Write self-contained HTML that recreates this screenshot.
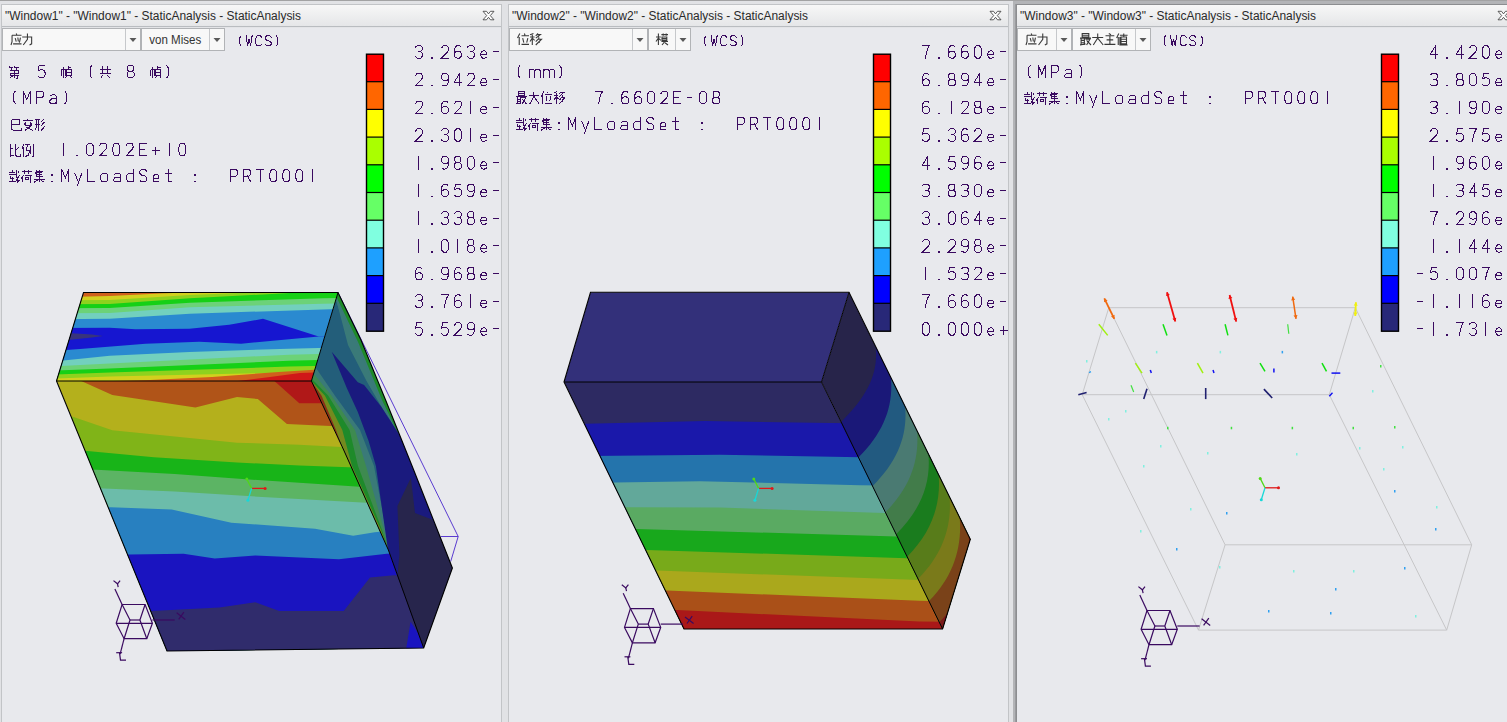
<!DOCTYPE html>
<html><head><meta charset="utf-8"><style>
html,body{margin:0;padding:0;width:1507px;height:722px;overflow:hidden;background:#e8e9ed;}
svg{display:block;position:absolute;left:0;top:0;}
</style></head><body>
<svg width="1507" height="722" viewBox="0 0 1507 722" shape-rendering="auto">
<rect x="0" y="0" width="1507" height="722" fill="#e1e2e5"/>
<rect x="0" y="0" width="1507" height="1" fill="#a2a2a3"/>
<rect x="1013" y="1" width="494" height="722" fill="#b3b4b7"/>
<rect x="1" y="4" width="501" height="718" fill="#c2c4c7"/>
<rect x="2" y="5" width="499" height="21" fill="url(#tg)"/>
<rect x="2" y="26" width="499" height="1" fill="#b9bcc0"/>
<rect x="2" y="27" width="499" height="695" fill="#e8e9ed"/>
<rect x="2" y="27" width="499" height="1" fill="#e3e4e7"/>
<rect x="508" y="4" width="501" height="718" fill="#c2c4c7"/>
<rect x="509" y="5" width="499" height="21" fill="url(#tg)"/>
<rect x="509" y="26" width="499" height="1" fill="#b9bcc0"/>
<rect x="509" y="27" width="499" height="695" fill="#e8e9ed"/>
<rect x="509" y="27" width="499" height="1" fill="#e3e4e7"/>
<rect x="1016" y="4" width="493" height="718" fill="#8c8d90"/>
<rect x="1017" y="5" width="491" height="21" fill="url(#tg)"/>
<rect x="1017" y="26" width="491" height="1" fill="#b9bcc0"/>
<rect x="1017" y="27" width="491" height="695" fill="#e8e9ed"/>
<rect x="1017" y="27" width="491" height="1" fill="#e3e4e7"/>
<rect x="1015" y="4" width="1" height="718" fill="#9a9b9e"/>
<defs><linearGradient id="tg" x1="0" y1="0" x2="0" y2="1"><stop offset="0" stop-color="#f7f7f7"/><stop offset="1" stop-color="#e5e6e8"/></linearGradient></defs>
<text x="5" y="20" font-family="Liberation Sans" font-size="12.3" fill="#2a2a2a" textLength="296" lengthAdjust="spacingAndGlyphs">"Window1" - "Window1" - StaticAnalysis - StaticAnalysis</text>
<text x="512" y="20" font-family="Liberation Sans" font-size="12.3" fill="#2a2a2a" textLength="296" lengthAdjust="spacingAndGlyphs">"Window2" - "Window2" - StaticAnalysis - StaticAnalysis</text>
<text x="1020" y="20" font-family="Liberation Sans" font-size="12.3" fill="#2a2a2a" textLength="296" lengthAdjust="spacingAndGlyphs">"Window3" - "Window3" - StaticAnalysis - StaticAnalysis</text>
<polygon points="483.0,11.3 486.5,11.3 488.5,13.9 490.5,11.3 494.0,11.3 490.3,15.6 494.0,19.8 490.5,19.8 488.5,17.3 486.5,19.8 483.0,19.8 486.7,15.6" fill="#ffffff" stroke="#404040" stroke-width="0.85" stroke-linejoin="round"/>
<polygon points="990.0,11.3 993.5,11.3 995.5,13.9 997.5,11.3 1001.0,11.3 997.3,15.6 1001.0,19.8 997.5,19.8 995.5,17.3 993.5,19.8 990.0,19.8 993.7,15.6" fill="#ffffff" stroke="#404040" stroke-width="0.85" stroke-linejoin="round"/>
<polygon points="1498.0,11.3 1501.5,11.3 1503.5,13.9 1505.5,11.3 1509.0,11.3 1505.3,15.6 1509.0,19.8 1505.5,19.8 1503.5,17.3 1501.5,19.8 1498.0,19.8 1501.7,15.6" fill="#ffffff" stroke="#404040" stroke-width="0.85" stroke-linejoin="round"/>
<rect x="2.5" y="28.5" width="138.0" height="22" fill="#f8f8f8" stroke="#b1b3b6" stroke-width="1"/>
<rect x="125" y="29" width="1" height="21" fill="#c6c8cb"/>
<path d="M129.5,38 L136.5,38 L133.0,42 Z" fill="#5a5a5a"/>
<rect x="141.5" y="28.5" width="83.0" height="22" fill="#f8f8f8" stroke="#b1b3b6" stroke-width="1"/>
<rect x="209" y="29" width="1" height="21" fill="#c6c8cb"/>
<path d="M213.5,38 L220.5,38 L217.0,42 Z" fill="#5a5a5a"/>
<text x="149.2" y="44" font-family="Liberation Sans" font-size="12.5" fill="#333" textLength="52" lengthAdjust="spacingAndGlyphs">von Mises</text>
<rect x="509.5" y="28.5" width="138.0" height="22" fill="#f8f8f8" stroke="#b1b3b6" stroke-width="1"/>
<rect x="632" y="29" width="1" height="21" fill="#c6c8cb"/>
<path d="M636.5,38 L643.5,38 L640.0,42 Z" fill="#5a5a5a"/>
<rect x="648.5" y="28.5" width="42.0" height="22" fill="#f8f8f8" stroke="#b1b3b6" stroke-width="1"/>
<rect x="675" y="29" width="1" height="21" fill="#c6c8cb"/>
<path d="M679.5,38 L686.5,38 L683.0,42 Z" fill="#5a5a5a"/>
<rect x="1017.5" y="28.5" width="54.0" height="22" fill="#f8f8f8" stroke="#b1b3b6" stroke-width="1"/>
<rect x="1056" y="29" width="1" height="21" fill="#c6c8cb"/>
<path d="M1060.5,38 L1067.5,38 L1064.0,42 Z" fill="#5a5a5a"/>
<rect x="1072.5" y="28.5" width="78.0" height="22" fill="#f8f8f8" stroke="#b1b3b6" stroke-width="1"/>
<rect x="1135" y="29" width="1" height="21" fill="#c6c8cb"/>
<path d="M1139.5,38 L1146.5,38 L1143.0,42 Z" fill="#5a5a5a"/>
<path d="M 241.00,35.90 L 239.50,38.15 L 239.50,43.40 L 241.00,45.65 M 246.10,35.90 L 247.60,45.65 L 249.10,38.90 L 250.60,45.65 L 252.10,35.90 M 261.70,37.40 L 260.20,35.90 L 257.20,35.90 L 255.70,38.15 L 255.70,43.40 L 257.20,45.65 L 260.20,45.65 L 261.70,44.15 M 271.30,37.40 L 269.80,35.90 L 266.80,35.90 L 265.30,37.40 L 265.30,38.90 L 266.80,40.40 L 269.80,41.15 L 271.30,42.65 L 271.30,44.15 L 269.80,45.65 L 266.80,45.65 L 265.30,44.15 M 276.40,35.90 L 277.90,38.15 L 277.90,43.40 L 276.40,45.65" fill="none" stroke="#3a0a60" stroke-width="1.00" stroke-linecap="square" stroke-linejoin="miter" shape-rendering="crispEdges"/>
<path d="M 706.00,35.90 L 704.50,38.15 L 704.50,43.40 L 706.00,45.65 M 711.10,35.90 L 712.60,45.65 L 714.10,38.90 L 715.60,45.65 L 717.10,35.90 M 726.70,37.40 L 725.20,35.90 L 722.20,35.90 L 720.70,38.15 L 720.70,43.40 L 722.20,45.65 L 725.20,45.65 L 726.70,44.15 M 736.30,37.40 L 734.80,35.90 L 731.80,35.90 L 730.30,37.40 L 730.30,38.90 L 731.80,40.40 L 734.80,41.15 L 736.30,42.65 L 736.30,44.15 L 734.80,45.65 L 731.80,45.65 L 730.30,44.15 M 741.40,35.90 L 742.90,38.15 L 742.90,43.40 L 741.40,45.65" fill="none" stroke="#3a0a60" stroke-width="1.00" stroke-linecap="square" stroke-linejoin="miter" shape-rendering="crispEdges"/>
<path d="M 1165.50,35.90 L 1164.00,38.15 L 1164.00,43.40 L 1165.50,45.65 M 1170.60,35.90 L 1172.10,45.65 L 1173.60,38.90 L 1175.10,45.65 L 1176.60,35.90 M 1186.20,37.40 L 1184.70,35.90 L 1181.70,35.90 L 1180.20,38.15 L 1180.20,43.40 L 1181.70,45.65 L 1184.70,45.65 L 1186.20,44.15 M 1195.80,37.40 L 1194.30,35.90 L 1191.30,35.90 L 1189.80,37.40 L 1189.80,38.90 L 1191.30,40.40 L 1194.30,41.15 L 1195.80,42.65 L 1195.80,44.15 L 1194.30,45.65 L 1191.30,45.65 L 1189.80,44.15 M 1200.90,35.90 L 1202.40,38.15 L 1202.40,43.40 L 1200.90,45.65" fill="none" stroke="#3a0a60" stroke-width="1.00" stroke-linecap="square" stroke-linejoin="miter" shape-rendering="crispEdges"/>
<rect x="366.5" y="54.00" width="17" height="28.00" fill="#ff0000"/>
<rect x="366.5" y="81.70" width="17" height="28.00" fill="#ff6600"/>
<rect x="366.5" y="109.40" width="17" height="28.00" fill="#ffff00"/>
<rect x="366.5" y="137.10" width="17" height="28.00" fill="#aaff00"/>
<rect x="366.5" y="164.80" width="17" height="28.00" fill="#00ff00"/>
<rect x="366.5" y="192.50" width="17" height="28.00" fill="#66ff66"/>
<rect x="366.5" y="220.20" width="17" height="28.00" fill="#80ffe0"/>
<rect x="366.5" y="247.90" width="17" height="28.00" fill="#1ea0ff"/>
<rect x="366.5" y="275.60" width="17" height="28.00" fill="#0000ff"/>
<rect x="366.5" y="303.30" width="17" height="28.00" fill="#282878"/>
<rect x="366.5" y="81.10" width="17" height="1.2" fill="#000"/>
<rect x="366.5" y="108.80" width="17" height="1.2" fill="#000"/>
<rect x="366.5" y="136.50" width="17" height="1.2" fill="#000"/>
<rect x="366.5" y="164.20" width="17" height="1.2" fill="#000"/>
<rect x="366.5" y="191.90" width="17" height="1.2" fill="#000"/>
<rect x="366.5" y="219.60" width="17" height="1.2" fill="#000"/>
<rect x="366.5" y="247.30" width="17" height="1.2" fill="#000"/>
<rect x="366.5" y="275.00" width="17" height="1.2" fill="#000"/>
<rect x="366.5" y="302.70" width="17" height="1.2" fill="#000"/>
<rect x="366.5" y="54.2" width="17" height="277.00" fill="none" stroke="#000" stroke-width="1.4"/>
<path d="M 415.66,47.05 L 417.15,45.60 L 420.65,45.60 L 422.14,47.05 L 422.14,49.97 L 420.65,51.61 L 418.02,51.61 M 420.65,51.61 L 422.40,53.36 L 422.40,56.27 L 420.65,58.21 L 417.15,58.21 L 415.40,56.76 M 431.55,57.63 L 432.25,57.63 L 432.25,58.21 L 431.55,58.21 Z M 441.66,48.02 L 442.71,46.18 L 444.02,45.60 L 446.21,45.60 L 447.79,46.38 L 448.40,48.02 L 448.40,49.97 L 447.52,51.91 L 441.40,58.21 L 448.40,58.21 M 460.52,46.57 L 459.21,45.60 L 457.02,45.60 L 455.27,47.05 L 454.40,50.45 L 454.40,55.30 L 455.27,57.24 L 457.02,58.21 L 459.21,58.21 L 460.79,57.24 L 461.40,55.30 L 461.40,53.36 L 460.52,51.91 L 459.21,51.23 L 457.02,51.23 L 455.27,52.20 L 454.40,53.84 M 467.66,47.05 L 469.15,45.60 L 472.65,45.60 L 474.14,47.05 L 474.14,49.97 L 472.65,51.61 L 470.02,51.61 M 472.65,51.61 L 474.40,53.36 L 474.40,56.27 L 472.65,58.21 L 469.15,58.21 L 467.40,56.76 M 480.84,54.33 L 486.52,54.33 L 486.52,52.88 L 485.65,51.42 L 484.60,50.94 L 482.85,50.94 L 481.54,51.71 L 480.84,53.36 L 480.84,55.79 L 481.54,57.53 L 482.85,58.21 L 484.60,58.21 L 486.52,57.24 M 493.84,51.91 L 498.65,51.91" fill="none" stroke="#3a0a60" stroke-width="1.00" stroke-linecap="square" stroke-linejoin="miter" shape-rendering="crispEdges"/>
<path d="M 415.66,75.72 L 416.71,73.88 L 418.02,73.30 L 420.21,73.30 L 421.79,74.08 L 422.40,75.72 L 422.40,77.66 L 421.52,79.60 L 415.40,85.91 L 422.40,85.91 M 431.55,85.33 L 432.25,85.33 L 432.25,85.91 L 431.55,85.91 Z M 448.40,78.63 L 447.52,80.09 L 445.77,80.58 L 444.02,80.58 L 442.27,79.60 L 441.40,78.15 L 441.40,75.72 L 442.71,73.78 L 444.02,73.30 L 446.21,73.30 L 447.79,74.27 L 448.40,76.21 L 448.40,80.09 L 447.96,83.00 L 446.65,85.42 L 445.34,85.91 L 443.59,85.91 L 441.84,84.94 M 459.65,85.91 L 459.65,73.30 L 454.40,82.03 L 461.40,82.03 M 467.66,75.72 L 468.71,73.88 L 470.02,73.30 L 472.21,73.30 L 473.79,74.08 L 474.40,75.72 L 474.40,77.66 L 473.52,79.60 L 467.40,85.91 L 474.40,85.91 M 480.84,82.03 L 486.52,82.03 L 486.52,80.58 L 485.65,79.12 L 484.60,78.63 L 482.85,78.63 L 481.54,79.41 L 480.84,81.06 L 480.84,83.48 L 481.54,85.23 L 482.85,85.91 L 484.60,85.91 L 486.52,84.94 M 493.84,79.60 L 498.65,79.60" fill="none" stroke="#3a0a60" stroke-width="1.00" stroke-linecap="square" stroke-linejoin="miter" shape-rendering="crispEdges"/>
<path d="M 415.66,103.42 L 416.71,101.58 L 418.02,101.00 L 420.21,101.00 L 421.79,101.78 L 422.40,103.42 L 422.40,105.36 L 421.52,107.31 L 415.40,113.61 L 422.40,113.61 M 431.55,113.03 L 432.25,113.03 L 432.25,113.61 L 431.55,113.61 Z M 447.52,101.97 L 446.21,101.00 L 444.02,101.00 L 442.27,102.45 L 441.40,105.85 L 441.40,110.70 L 442.27,112.64 L 444.02,113.61 L 446.21,113.61 L 447.79,112.64 L 448.40,110.70 L 448.40,108.76 L 447.52,107.31 L 446.21,106.63 L 444.02,106.63 L 442.27,107.60 L 441.40,109.25 M 454.66,103.42 L 455.71,101.58 L 457.02,101.00 L 459.21,101.00 L 460.79,101.78 L 461.40,103.42 L 461.40,105.36 L 460.52,107.31 L 454.40,113.61 L 461.40,113.61 M 470.90,101.00 L 470.90,113.61 M 480.84,109.73 L 486.52,109.73 L 486.52,108.28 L 485.65,106.82 L 484.60,106.33 L 482.85,106.33 L 481.54,107.11 L 480.84,108.76 L 480.84,111.19 L 481.54,112.93 L 482.85,113.61 L 484.60,113.61 L 486.52,112.64 M 493.84,107.31 L 498.65,107.31" fill="none" stroke="#3a0a60" stroke-width="1.00" stroke-linecap="square" stroke-linejoin="miter" shape-rendering="crispEdges"/>
<path d="M 415.66,131.12 L 416.71,129.28 L 418.02,128.70 L 420.21,128.70 L 421.79,129.48 L 422.40,131.12 L 422.40,133.06 L 421.52,135.00 L 415.40,141.31 L 422.40,141.31 M 431.55,140.73 L 432.25,140.73 L 432.25,141.31 L 431.55,141.31 Z M 441.66,130.16 L 443.15,128.70 L 446.65,128.70 L 448.14,130.16 L 448.14,133.06 L 446.65,134.71 L 444.02,134.71 M 446.65,134.71 L 448.40,136.46 L 448.40,139.37 L 446.65,141.31 L 443.15,141.31 L 441.40,139.85 M 456.59,128.70 L 459.21,128.70 L 460.96,130.64 L 461.40,133.55 L 461.40,136.46 L 460.96,139.37 L 459.21,141.31 L 456.59,141.31 L 454.84,139.37 L 454.40,136.46 L 454.40,133.55 L 454.84,130.64 Z M 470.90,128.70 L 470.90,141.31 M 480.84,137.43 L 486.52,137.43 L 486.52,135.97 L 485.65,134.52 L 484.60,134.03 L 482.85,134.03 L 481.54,134.81 L 480.84,136.46 L 480.84,138.88 L 481.54,140.63 L 482.85,141.31 L 484.60,141.31 L 486.52,140.34 M 493.84,135.00 L 498.65,135.00" fill="none" stroke="#3a0a60" stroke-width="1.00" stroke-linecap="square" stroke-linejoin="miter" shape-rendering="crispEdges"/>
<path d="M 418.90,156.40 L 418.90,169.01 M 431.55,168.43 L 432.25,168.43 L 432.25,169.01 L 431.55,169.01 Z M 448.40,161.74 L 447.52,163.19 L 445.77,163.68 L 444.02,163.68 L 442.27,162.71 L 441.40,161.25 L 441.40,158.83 L 442.71,156.89 L 444.02,156.40 L 446.21,156.40 L 447.79,157.37 L 448.40,159.31 L 448.40,163.19 L 447.96,166.10 L 446.65,168.53 L 445.34,169.01 L 443.59,169.01 L 441.84,168.04 M 456.15,156.40 L 459.65,156.40 L 460.96,157.86 L 460.96,160.77 L 459.65,162.41 L 456.15,162.41 L 454.84,160.77 L 454.84,157.86 Z M 456.15,162.41 L 459.65,162.41 L 461.40,164.16 L 461.40,167.36 L 459.65,169.01 L 456.15,169.01 L 454.40,167.36 L 454.40,164.16 Z M 469.59,156.40 L 472.21,156.40 L 473.96,158.34 L 474.40,161.25 L 474.40,164.16 L 473.96,167.07 L 472.21,169.01 L 469.59,169.01 L 467.84,167.07 L 467.40,164.16 L 467.40,161.25 L 467.84,158.34 Z M 480.84,165.13 L 486.52,165.13 L 486.52,163.68 L 485.65,162.22 L 484.60,161.74 L 482.85,161.74 L 481.54,162.51 L 480.84,164.16 L 480.84,166.59 L 481.54,168.33 L 482.85,169.01 L 484.60,169.01 L 486.52,168.04 M 493.84,162.71 L 498.65,162.71" fill="none" stroke="#3a0a60" stroke-width="1.00" stroke-linecap="square" stroke-linejoin="miter" shape-rendering="crispEdges"/>
<path d="M 418.90,184.10 L 418.90,196.71 M 431.55,196.13 L 432.25,196.13 L 432.25,196.71 L 431.55,196.71 Z M 447.52,185.07 L 446.21,184.10 L 444.02,184.10 L 442.27,185.56 L 441.40,188.95 L 441.40,193.80 L 442.27,195.74 L 444.02,196.71 L 446.21,196.71 L 447.79,195.74 L 448.40,193.80 L 448.40,191.86 L 447.52,190.41 L 446.21,189.73 L 444.02,189.73 L 442.27,190.70 L 441.40,192.34 M 460.96,184.10 L 455.27,184.10 L 454.84,189.44 L 456.59,188.76 L 459.21,188.76 L 460.96,189.92 L 461.40,192.34 L 460.96,195.25 L 459.21,196.71 L 456.59,196.71 L 454.40,195.25 M 474.40,189.44 L 473.52,190.89 L 471.77,191.38 L 470.02,191.38 L 468.27,190.41 L 467.40,188.95 L 467.40,186.53 L 468.71,184.59 L 470.02,184.10 L 472.21,184.10 L 473.79,185.07 L 474.40,187.01 L 474.40,190.89 L 473.96,193.80 L 472.65,196.22 L 471.34,196.71 L 469.59,196.71 L 467.84,195.74 M 480.84,192.83 L 486.52,192.83 L 486.52,191.38 L 485.65,189.92 L 484.60,189.44 L 482.85,189.44 L 481.54,190.21 L 480.84,191.86 L 480.84,194.28 L 481.54,196.03 L 482.85,196.71 L 484.60,196.71 L 486.52,195.74 M 493.84,190.41 L 498.65,190.41" fill="none" stroke="#3a0a60" stroke-width="1.00" stroke-linecap="square" stroke-linejoin="miter" shape-rendering="crispEdges"/>
<path d="M 418.90,211.80 L 418.90,224.41 M 431.55,223.83 L 432.25,223.83 L 432.25,224.41 L 431.55,224.41 Z M 441.66,213.25 L 443.15,211.80 L 446.65,211.80 L 448.14,213.25 L 448.14,216.16 L 446.65,217.81 L 444.02,217.81 M 446.65,217.81 L 448.40,219.56 L 448.40,222.47 L 446.65,224.41 L 443.15,224.41 L 441.40,222.95 M 454.66,213.25 L 456.15,211.80 L 459.65,211.80 L 461.14,213.25 L 461.14,216.16 L 459.65,217.81 L 457.02,217.81 M 459.65,217.81 L 461.40,219.56 L 461.40,222.47 L 459.65,224.41 L 456.15,224.41 L 454.40,222.95 M 469.15,211.80 L 472.65,211.80 L 473.96,213.25 L 473.96,216.16 L 472.65,217.81 L 469.15,217.81 L 467.84,216.16 L 467.84,213.25 Z M 469.15,217.81 L 472.65,217.81 L 474.40,219.56 L 474.40,222.76 L 472.65,224.41 L 469.15,224.41 L 467.40,222.76 L 467.40,219.56 Z M 480.84,220.53 L 486.52,220.53 L 486.52,219.07 L 485.65,217.62 L 484.60,217.13 L 482.85,217.13 L 481.54,217.91 L 480.84,219.56 L 480.84,221.98 L 481.54,223.73 L 482.85,224.41 L 484.60,224.41 L 486.52,223.44 M 493.84,218.10 L 498.65,218.10" fill="none" stroke="#3a0a60" stroke-width="1.00" stroke-linecap="square" stroke-linejoin="miter" shape-rendering="crispEdges"/>
<path d="M 418.90,239.50 L 418.90,252.11 M 431.55,251.53 L 432.25,251.53 L 432.25,252.11 L 431.55,252.11 Z M 443.59,239.50 L 446.21,239.50 L 447.96,241.44 L 448.40,244.35 L 448.40,247.26 L 447.96,250.17 L 446.21,252.11 L 443.59,252.11 L 441.84,250.17 L 441.40,247.26 L 441.40,244.35 L 441.84,241.44 Z M 457.90,239.50 L 457.90,252.11 M 469.15,239.50 L 472.65,239.50 L 473.96,240.96 L 473.96,243.87 L 472.65,245.51 L 469.15,245.51 L 467.84,243.87 L 467.84,240.96 Z M 469.15,245.51 L 472.65,245.51 L 474.40,247.26 L 474.40,250.46 L 472.65,252.11 L 469.15,252.11 L 467.40,250.46 L 467.40,247.26 Z M 480.84,248.23 L 486.52,248.23 L 486.52,246.78 L 485.65,245.32 L 484.60,244.84 L 482.85,244.84 L 481.54,245.61 L 480.84,247.26 L 480.84,249.69 L 481.54,251.43 L 482.85,252.11 L 484.60,252.11 L 486.52,251.14 M 493.84,245.81 L 498.65,245.81" fill="none" stroke="#3a0a60" stroke-width="1.00" stroke-linecap="square" stroke-linejoin="miter" shape-rendering="crispEdges"/>
<path d="M 421.52,268.17 L 420.21,267.20 L 418.02,267.20 L 416.27,268.65 L 415.40,272.05 L 415.40,276.90 L 416.27,278.84 L 418.02,279.81 L 420.21,279.81 L 421.79,278.84 L 422.40,276.90 L 422.40,274.96 L 421.52,273.50 L 420.21,272.83 L 418.02,272.83 L 416.27,273.80 L 415.40,275.44 M 431.55,279.23 L 432.25,279.23 L 432.25,279.81 L 431.55,279.81 Z M 448.40,272.53 L 447.52,273.99 L 445.77,274.47 L 444.02,274.47 L 442.27,273.50 L 441.40,272.05 L 441.40,269.62 L 442.71,267.69 L 444.02,267.20 L 446.21,267.20 L 447.79,268.17 L 448.40,270.11 L 448.40,273.99 L 447.96,276.90 L 446.65,279.32 L 445.34,279.81 L 443.59,279.81 L 441.84,278.84 M 460.52,268.17 L 459.21,267.20 L 457.02,267.20 L 455.27,268.65 L 454.40,272.05 L 454.40,276.90 L 455.27,278.84 L 457.02,279.81 L 459.21,279.81 L 460.79,278.84 L 461.40,276.90 L 461.40,274.96 L 460.52,273.50 L 459.21,272.83 L 457.02,272.83 L 455.27,273.80 L 454.40,275.44 M 469.15,267.20 L 472.65,267.20 L 473.96,268.65 L 473.96,271.56 L 472.65,273.21 L 469.15,273.21 L 467.84,271.56 L 467.84,268.65 Z M 469.15,273.21 L 472.65,273.21 L 474.40,274.96 L 474.40,278.16 L 472.65,279.81 L 469.15,279.81 L 467.40,278.16 L 467.40,274.96 Z M 480.84,275.93 L 486.52,275.93 L 486.52,274.47 L 485.65,273.02 L 484.60,272.53 L 482.85,272.53 L 481.54,273.31 L 480.84,274.96 L 480.84,277.38 L 481.54,279.13 L 482.85,279.81 L 484.60,279.81 L 486.52,278.84 M 493.84,273.50 L 498.65,273.50" fill="none" stroke="#3a0a60" stroke-width="1.00" stroke-linecap="square" stroke-linejoin="miter" shape-rendering="crispEdges"/>
<path d="M 415.66,296.35 L 417.15,294.90 L 420.65,294.90 L 422.14,296.35 L 422.14,299.26 L 420.65,300.91 L 418.02,300.91 M 420.65,300.91 L 422.40,302.66 L 422.40,305.57 L 420.65,307.51 L 417.15,307.51 L 415.40,306.05 M 431.55,306.93 L 432.25,306.93 L 432.25,307.51 L 431.55,307.51 Z M 441.40,294.90 L 448.40,294.90 L 446.65,298.29 L 445.34,302.17 L 444.46,307.51 M 460.52,295.87 L 459.21,294.90 L 457.02,294.90 L 455.27,296.35 L 454.40,299.75 L 454.40,304.60 L 455.27,306.54 L 457.02,307.51 L 459.21,307.51 L 460.79,306.54 L 461.40,304.60 L 461.40,302.66 L 460.52,301.20 L 459.21,300.53 L 457.02,300.53 L 455.27,301.50 L 454.40,303.14 M 470.90,294.90 L 470.90,307.51 M 480.84,303.63 L 486.52,303.63 L 486.52,302.17 L 485.65,300.72 L 484.60,300.23 L 482.85,300.23 L 481.54,301.01 L 480.84,302.66 L 480.84,305.08 L 481.54,306.83 L 482.85,307.51 L 484.60,307.51 L 486.52,306.54 M 493.84,301.20 L 498.65,301.20" fill="none" stroke="#3a0a60" stroke-width="1.00" stroke-linecap="square" stroke-linejoin="miter" shape-rendering="crispEdges"/>
<path d="M 421.96,322.60 L 416.27,322.60 L 415.84,327.94 L 417.59,327.26 L 420.21,327.26 L 421.96,328.42 L 422.40,330.85 L 421.96,333.75 L 420.21,335.21 L 417.59,335.21 L 415.40,333.75 M 431.55,334.63 L 432.25,334.63 L 432.25,335.21 L 431.55,335.21 Z M 447.96,322.60 L 442.27,322.60 L 441.84,327.94 L 443.59,327.26 L 446.21,327.26 L 447.96,328.42 L 448.40,330.85 L 447.96,333.75 L 446.21,335.21 L 443.59,335.21 L 441.40,333.75 M 454.66,325.03 L 455.71,323.18 L 457.02,322.60 L 459.21,322.60 L 460.79,323.38 L 461.40,325.03 L 461.40,326.97 L 460.52,328.91 L 454.40,335.21 L 461.40,335.21 M 474.40,327.94 L 473.52,329.39 L 471.77,329.88 L 470.02,329.88 L 468.27,328.91 L 467.40,327.45 L 467.40,325.03 L 468.71,323.09 L 470.02,322.60 L 472.21,322.60 L 473.79,323.57 L 474.40,325.51 L 474.40,329.39 L 473.96,332.30 L 472.65,334.73 L 471.34,335.21 L 469.59,335.21 L 467.84,334.24 M 480.84,331.33 L 486.52,331.33 L 486.52,329.88 L 485.65,328.42 L 484.60,327.94 L 482.85,327.94 L 481.54,328.71 L 480.84,330.36 L 480.84,332.79 L 481.54,334.53 L 482.85,335.21 L 484.60,335.21 L 486.52,334.24 M 493.84,328.91 L 498.65,328.91" fill="none" stroke="#3a0a60" stroke-width="1.00" stroke-linecap="square" stroke-linejoin="miter" shape-rendering="crispEdges"/>
<rect x="873.5" y="54.00" width="17" height="28.00" fill="#ff0000"/>
<rect x="873.5" y="81.70" width="17" height="28.00" fill="#ff6600"/>
<rect x="873.5" y="109.40" width="17" height="28.00" fill="#ffff00"/>
<rect x="873.5" y="137.10" width="17" height="28.00" fill="#aaff00"/>
<rect x="873.5" y="164.80" width="17" height="28.00" fill="#00ff00"/>
<rect x="873.5" y="192.50" width="17" height="28.00" fill="#66ff66"/>
<rect x="873.5" y="220.20" width="17" height="28.00" fill="#80ffe0"/>
<rect x="873.5" y="247.90" width="17" height="28.00" fill="#1ea0ff"/>
<rect x="873.5" y="275.60" width="17" height="28.00" fill="#0000ff"/>
<rect x="873.5" y="303.30" width="17" height="28.00" fill="#282878"/>
<rect x="873.5" y="81.10" width="17" height="1.2" fill="#000"/>
<rect x="873.5" y="108.80" width="17" height="1.2" fill="#000"/>
<rect x="873.5" y="136.50" width="17" height="1.2" fill="#000"/>
<rect x="873.5" y="164.20" width="17" height="1.2" fill="#000"/>
<rect x="873.5" y="191.90" width="17" height="1.2" fill="#000"/>
<rect x="873.5" y="219.60" width="17" height="1.2" fill="#000"/>
<rect x="873.5" y="247.30" width="17" height="1.2" fill="#000"/>
<rect x="873.5" y="275.00" width="17" height="1.2" fill="#000"/>
<rect x="873.5" y="302.70" width="17" height="1.2" fill="#000"/>
<rect x="873.5" y="54.2" width="17" height="277.00" fill="none" stroke="#000" stroke-width="1.4"/>
<path d="M 922.40,45.60 L 929.40,45.60 L 927.65,49.00 L 926.34,52.88 L 925.46,58.21 M 938.55,57.63 L 939.25,57.63 L 939.25,58.21 L 938.55,58.21 Z M 954.52,46.57 L 953.21,45.60 L 951.02,45.60 L 949.27,47.05 L 948.40,50.45 L 948.40,55.30 L 949.27,57.24 L 951.02,58.21 L 953.21,58.21 L 954.79,57.24 L 955.40,55.30 L 955.40,53.36 L 954.52,51.91 L 953.21,51.23 L 951.02,51.23 L 949.27,52.20 L 948.40,53.84 M 967.52,46.57 L 966.21,45.60 L 964.02,45.60 L 962.27,47.05 L 961.40,50.45 L 961.40,55.30 L 962.27,57.24 L 964.02,58.21 L 966.21,58.21 L 967.79,57.24 L 968.40,55.30 L 968.40,53.36 L 967.52,51.91 L 966.21,51.23 L 964.02,51.23 L 962.27,52.20 L 961.40,53.84 M 976.59,45.60 L 979.21,45.60 L 980.96,47.54 L 981.40,50.45 L 981.40,53.36 L 980.96,56.27 L 979.21,58.21 L 976.59,58.21 L 974.84,56.27 L 974.40,53.36 L 974.40,50.45 L 974.84,47.54 Z M 987.84,54.33 L 993.52,54.33 L 993.52,52.88 L 992.65,51.42 L 991.60,50.94 L 989.85,50.94 L 988.54,51.71 L 987.84,53.36 L 987.84,55.79 L 988.54,57.53 L 989.85,58.21 L 991.60,58.21 L 993.52,57.24 M 1000.84,51.91 L 1005.65,51.91" fill="none" stroke="#3a0a60" stroke-width="1.00" stroke-linecap="square" stroke-linejoin="miter" shape-rendering="crispEdges"/>
<path d="M 928.52,74.27 L 927.21,73.30 L 925.02,73.30 L 923.27,74.75 L 922.40,78.15 L 922.40,83.00 L 923.27,84.94 L 925.02,85.91 L 927.21,85.91 L 928.79,84.94 L 929.40,83.00 L 929.40,81.06 L 928.52,79.60 L 927.21,78.93 L 925.02,78.93 L 923.27,79.90 L 922.40,81.55 M 938.55,85.33 L 939.25,85.33 L 939.25,85.91 L 938.55,85.91 Z M 950.15,73.30 L 953.65,73.30 L 954.96,74.75 L 954.96,77.66 L 953.65,79.31 L 950.15,79.31 L 948.84,77.66 L 948.84,74.75 Z M 950.15,79.31 L 953.65,79.31 L 955.40,81.06 L 955.40,84.26 L 953.65,85.91 L 950.15,85.91 L 948.40,84.26 L 948.40,81.06 Z M 968.40,78.63 L 967.52,80.09 L 965.77,80.58 L 964.02,80.58 L 962.27,79.60 L 961.40,78.15 L 961.40,75.72 L 962.71,73.78 L 964.02,73.30 L 966.21,73.30 L 967.79,74.27 L 968.40,76.21 L 968.40,80.09 L 967.96,83.00 L 966.65,85.42 L 965.34,85.91 L 963.59,85.91 L 961.84,84.94 M 979.65,85.91 L 979.65,73.30 L 974.40,82.03 L 981.40,82.03 M 987.84,82.03 L 993.52,82.03 L 993.52,80.58 L 992.65,79.12 L 991.60,78.63 L 989.85,78.63 L 988.54,79.41 L 987.84,81.06 L 987.84,83.48 L 988.54,85.23 L 989.85,85.91 L 991.60,85.91 L 993.52,84.94 M 1000.84,79.60 L 1005.65,79.60" fill="none" stroke="#3a0a60" stroke-width="1.00" stroke-linecap="square" stroke-linejoin="miter" shape-rendering="crispEdges"/>
<path d="M 928.52,101.97 L 927.21,101.00 L 925.02,101.00 L 923.27,102.45 L 922.40,105.85 L 922.40,110.70 L 923.27,112.64 L 925.02,113.61 L 927.21,113.61 L 928.79,112.64 L 929.40,110.70 L 929.40,108.76 L 928.52,107.31 L 927.21,106.63 L 925.02,106.63 L 923.27,107.60 L 922.40,109.25 M 938.55,113.03 L 939.25,113.03 L 939.25,113.61 L 938.55,113.61 Z M 951.90,101.00 L 951.90,113.61 M 961.66,103.42 L 962.71,101.58 L 964.02,101.00 L 966.21,101.00 L 967.79,101.78 L 968.40,103.42 L 968.40,105.36 L 967.52,107.31 L 961.40,113.61 L 968.40,113.61 M 976.15,101.00 L 979.65,101.00 L 980.96,102.45 L 980.96,105.36 L 979.65,107.01 L 976.15,107.01 L 974.84,105.36 L 974.84,102.45 Z M 976.15,107.01 L 979.65,107.01 L 981.40,108.76 L 981.40,111.96 L 979.65,113.61 L 976.15,113.61 L 974.40,111.96 L 974.40,108.76 Z M 987.84,109.73 L 993.52,109.73 L 993.52,108.28 L 992.65,106.82 L 991.60,106.33 L 989.85,106.33 L 988.54,107.11 L 987.84,108.76 L 987.84,111.19 L 988.54,112.93 L 989.85,113.61 L 991.60,113.61 L 993.52,112.64 M 1000.84,107.31 L 1005.65,107.31" fill="none" stroke="#3a0a60" stroke-width="1.00" stroke-linecap="square" stroke-linejoin="miter" shape-rendering="crispEdges"/>
<path d="M 928.96,128.70 L 923.27,128.70 L 922.84,134.03 L 924.59,133.36 L 927.21,133.36 L 928.96,134.52 L 929.40,136.94 L 928.96,139.85 L 927.21,141.31 L 924.59,141.31 L 922.40,139.85 M 938.55,140.73 L 939.25,140.73 L 939.25,141.31 L 938.55,141.31 Z M 948.66,130.16 L 950.15,128.70 L 953.65,128.70 L 955.14,130.16 L 955.14,133.06 L 953.65,134.71 L 951.02,134.71 M 953.65,134.71 L 955.40,136.46 L 955.40,139.37 L 953.65,141.31 L 950.15,141.31 L 948.40,139.85 M 967.52,129.67 L 966.21,128.70 L 964.02,128.70 L 962.27,130.16 L 961.40,133.55 L 961.40,138.40 L 962.27,140.34 L 964.02,141.31 L 966.21,141.31 L 967.79,140.34 L 968.40,138.40 L 968.40,136.46 L 967.52,135.00 L 966.21,134.33 L 964.02,134.33 L 962.27,135.30 L 961.40,136.94 M 974.66,131.12 L 975.71,129.28 L 977.02,128.70 L 979.21,128.70 L 980.79,129.48 L 981.40,131.12 L 981.40,133.06 L 980.52,135.00 L 974.40,141.31 L 981.40,141.31 M 987.84,137.43 L 993.52,137.43 L 993.52,135.97 L 992.65,134.52 L 991.60,134.03 L 989.85,134.03 L 988.54,134.81 L 987.84,136.46 L 987.84,138.88 L 988.54,140.63 L 989.85,141.31 L 991.60,141.31 L 993.52,140.34 M 1000.84,135.00 L 1005.65,135.00" fill="none" stroke="#3a0a60" stroke-width="1.00" stroke-linecap="square" stroke-linejoin="miter" shape-rendering="crispEdges"/>
<path d="M 927.65,169.01 L 927.65,156.40 L 922.40,165.13 L 929.40,165.13 M 938.55,168.43 L 939.25,168.43 L 939.25,169.01 L 938.55,169.01 Z M 954.96,156.40 L 949.27,156.40 L 948.84,161.74 L 950.59,161.06 L 953.21,161.06 L 954.96,162.22 L 955.40,164.65 L 954.96,167.56 L 953.21,169.01 L 950.59,169.01 L 948.40,167.56 M 968.40,161.74 L 967.52,163.19 L 965.77,163.68 L 964.02,163.68 L 962.27,162.71 L 961.40,161.25 L 961.40,158.83 L 962.71,156.89 L 964.02,156.40 L 966.21,156.40 L 967.79,157.37 L 968.40,159.31 L 968.40,163.19 L 967.96,166.10 L 966.65,168.53 L 965.34,169.01 L 963.59,169.01 L 961.84,168.04 M 980.52,157.37 L 979.21,156.40 L 977.02,156.40 L 975.27,157.86 L 974.40,161.25 L 974.40,166.10 L 975.27,168.04 L 977.02,169.01 L 979.21,169.01 L 980.79,168.04 L 981.40,166.10 L 981.40,164.16 L 980.52,162.71 L 979.21,162.03 L 977.02,162.03 L 975.27,163.00 L 974.40,164.65 M 987.84,165.13 L 993.52,165.13 L 993.52,163.68 L 992.65,162.22 L 991.60,161.74 L 989.85,161.74 L 988.54,162.51 L 987.84,164.16 L 987.84,166.59 L 988.54,168.33 L 989.85,169.01 L 991.60,169.01 L 993.52,168.04 M 1000.84,162.71 L 1005.65,162.71" fill="none" stroke="#3a0a60" stroke-width="1.00" stroke-linecap="square" stroke-linejoin="miter" shape-rendering="crispEdges"/>
<path d="M 922.66,185.56 L 924.15,184.10 L 927.65,184.10 L 929.14,185.56 L 929.14,188.47 L 927.65,190.11 L 925.02,190.11 M 927.65,190.11 L 929.40,191.86 L 929.40,194.77 L 927.65,196.71 L 924.15,196.71 L 922.40,195.25 M 938.55,196.13 L 939.25,196.13 L 939.25,196.71 L 938.55,196.71 Z M 950.15,184.10 L 953.65,184.10 L 954.96,185.56 L 954.96,188.47 L 953.65,190.11 L 950.15,190.11 L 948.84,188.47 L 948.84,185.56 Z M 950.15,190.11 L 953.65,190.11 L 955.40,191.86 L 955.40,195.06 L 953.65,196.71 L 950.15,196.71 L 948.40,195.06 L 948.40,191.86 Z M 961.66,185.56 L 963.15,184.10 L 966.65,184.10 L 968.14,185.56 L 968.14,188.47 L 966.65,190.11 L 964.02,190.11 M 966.65,190.11 L 968.40,191.86 L 968.40,194.77 L 966.65,196.71 L 963.15,196.71 L 961.40,195.25 M 976.59,184.10 L 979.21,184.10 L 980.96,186.04 L 981.40,188.95 L 981.40,191.86 L 980.96,194.77 L 979.21,196.71 L 976.59,196.71 L 974.84,194.77 L 974.40,191.86 L 974.40,188.95 L 974.84,186.04 Z M 987.84,192.83 L 993.52,192.83 L 993.52,191.38 L 992.65,189.92 L 991.60,189.44 L 989.85,189.44 L 988.54,190.21 L 987.84,191.86 L 987.84,194.28 L 988.54,196.03 L 989.85,196.71 L 991.60,196.71 L 993.52,195.74 M 1000.84,190.41 L 1005.65,190.41" fill="none" stroke="#3a0a60" stroke-width="1.00" stroke-linecap="square" stroke-linejoin="miter" shape-rendering="crispEdges"/>
<path d="M 922.66,213.25 L 924.15,211.80 L 927.65,211.80 L 929.14,213.25 L 929.14,216.16 L 927.65,217.81 L 925.02,217.81 M 927.65,217.81 L 929.40,219.56 L 929.40,222.47 L 927.65,224.41 L 924.15,224.41 L 922.40,222.95 M 938.55,223.83 L 939.25,223.83 L 939.25,224.41 L 938.55,224.41 Z M 950.59,211.80 L 953.21,211.80 L 954.96,213.74 L 955.40,216.65 L 955.40,219.56 L 954.96,222.47 L 953.21,224.41 L 950.59,224.41 L 948.84,222.47 L 948.40,219.56 L 948.40,216.65 L 948.84,213.74 Z M 967.52,212.77 L 966.21,211.80 L 964.02,211.80 L 962.27,213.25 L 961.40,216.65 L 961.40,221.50 L 962.27,223.44 L 964.02,224.41 L 966.21,224.41 L 967.79,223.44 L 968.40,221.50 L 968.40,219.56 L 967.52,218.10 L 966.21,217.43 L 964.02,217.43 L 962.27,218.40 L 961.40,220.04 M 979.65,224.41 L 979.65,211.80 L 974.40,220.53 L 981.40,220.53 M 987.84,220.53 L 993.52,220.53 L 993.52,219.07 L 992.65,217.62 L 991.60,217.13 L 989.85,217.13 L 988.54,217.91 L 987.84,219.56 L 987.84,221.98 L 988.54,223.73 L 989.85,224.41 L 991.60,224.41 L 993.52,223.44 M 1000.84,218.10 L 1005.65,218.10" fill="none" stroke="#3a0a60" stroke-width="1.00" stroke-linecap="square" stroke-linejoin="miter" shape-rendering="crispEdges"/>
<path d="M 922.66,241.93 L 923.71,240.08 L 925.02,239.50 L 927.21,239.50 L 928.79,240.28 L 929.40,241.93 L 929.40,243.87 L 928.52,245.81 L 922.40,252.11 L 929.40,252.11 M 938.55,251.53 L 939.25,251.53 L 939.25,252.11 L 938.55,252.11 Z M 948.66,241.93 L 949.71,240.08 L 951.02,239.50 L 953.21,239.50 L 954.79,240.28 L 955.40,241.93 L 955.40,243.87 L 954.52,245.81 L 948.40,252.11 L 955.40,252.11 M 968.40,244.84 L 967.52,246.29 L 965.77,246.78 L 964.02,246.78 L 962.27,245.81 L 961.40,244.35 L 961.40,241.93 L 962.71,239.99 L 964.02,239.50 L 966.21,239.50 L 967.79,240.47 L 968.40,242.41 L 968.40,246.29 L 967.96,249.20 L 966.65,251.62 L 965.34,252.11 L 963.59,252.11 L 961.84,251.14 M 976.15,239.50 L 979.65,239.50 L 980.96,240.96 L 980.96,243.87 L 979.65,245.51 L 976.15,245.51 L 974.84,243.87 L 974.84,240.96 Z M 976.15,245.51 L 979.65,245.51 L 981.40,247.26 L 981.40,250.46 L 979.65,252.11 L 976.15,252.11 L 974.40,250.46 L 974.40,247.26 Z M 987.84,248.23 L 993.52,248.23 L 993.52,246.78 L 992.65,245.32 L 991.60,244.84 L 989.85,244.84 L 988.54,245.61 L 987.84,247.26 L 987.84,249.69 L 988.54,251.43 L 989.85,252.11 L 991.60,252.11 L 993.52,251.14 M 1000.84,245.81 L 1005.65,245.81" fill="none" stroke="#3a0a60" stroke-width="1.00" stroke-linecap="square" stroke-linejoin="miter" shape-rendering="crispEdges"/>
<path d="M 925.90,267.20 L 925.90,279.81 M 938.55,279.23 L 939.25,279.23 L 939.25,279.81 L 938.55,279.81 Z M 954.96,267.20 L 949.27,267.20 L 948.84,272.53 L 950.59,271.86 L 953.21,271.86 L 954.96,273.02 L 955.40,275.44 L 954.96,278.35 L 953.21,279.81 L 950.59,279.81 L 948.40,278.35 M 961.66,268.65 L 963.15,267.20 L 966.65,267.20 L 968.14,268.65 L 968.14,271.56 L 966.65,273.21 L 964.02,273.21 M 966.65,273.21 L 968.40,274.96 L 968.40,277.87 L 966.65,279.81 L 963.15,279.81 L 961.40,278.35 M 974.66,269.62 L 975.71,267.78 L 977.02,267.20 L 979.21,267.20 L 980.79,267.98 L 981.40,269.62 L 981.40,271.56 L 980.52,273.50 L 974.40,279.81 L 981.40,279.81 M 987.84,275.93 L 993.52,275.93 L 993.52,274.47 L 992.65,273.02 L 991.60,272.53 L 989.85,272.53 L 988.54,273.31 L 987.84,274.96 L 987.84,277.38 L 988.54,279.13 L 989.85,279.81 L 991.60,279.81 L 993.52,278.84 M 1000.84,273.50 L 1005.65,273.50" fill="none" stroke="#3a0a60" stroke-width="1.00" stroke-linecap="square" stroke-linejoin="miter" shape-rendering="crispEdges"/>
<path d="M 922.40,294.90 L 929.40,294.90 L 927.65,298.29 L 926.34,302.17 L 925.46,307.51 M 938.55,306.93 L 939.25,306.93 L 939.25,307.51 L 938.55,307.51 Z M 954.52,295.87 L 953.21,294.90 L 951.02,294.90 L 949.27,296.35 L 948.40,299.75 L 948.40,304.60 L 949.27,306.54 L 951.02,307.51 L 953.21,307.51 L 954.79,306.54 L 955.40,304.60 L 955.40,302.66 L 954.52,301.20 L 953.21,300.53 L 951.02,300.53 L 949.27,301.50 L 948.40,303.14 M 967.52,295.87 L 966.21,294.90 L 964.02,294.90 L 962.27,296.35 L 961.40,299.75 L 961.40,304.60 L 962.27,306.54 L 964.02,307.51 L 966.21,307.51 L 967.79,306.54 L 968.40,304.60 L 968.40,302.66 L 967.52,301.20 L 966.21,300.53 L 964.02,300.53 L 962.27,301.50 L 961.40,303.14 M 976.59,294.90 L 979.21,294.90 L 980.96,296.84 L 981.40,299.75 L 981.40,302.66 L 980.96,305.57 L 979.21,307.51 L 976.59,307.51 L 974.84,305.57 L 974.40,302.66 L 974.40,299.75 L 974.84,296.84 Z M 987.84,303.63 L 993.52,303.63 L 993.52,302.17 L 992.65,300.72 L 991.60,300.23 L 989.85,300.23 L 988.54,301.01 L 987.84,302.66 L 987.84,305.08 L 988.54,306.83 L 989.85,307.51 L 991.60,307.51 L 993.52,306.54 M 1000.84,301.20 L 1005.65,301.20" fill="none" stroke="#3a0a60" stroke-width="1.00" stroke-linecap="square" stroke-linejoin="miter" shape-rendering="crispEdges"/>
<path d="M 924.59,322.60 L 927.21,322.60 L 928.96,324.54 L 929.40,327.45 L 929.40,330.36 L 928.96,333.27 L 927.21,335.21 L 924.59,335.21 L 922.84,333.27 L 922.40,330.36 L 922.40,327.45 L 922.84,324.54 Z M 938.55,334.63 L 939.25,334.63 L 939.25,335.21 L 938.55,335.21 Z M 950.59,322.60 L 953.21,322.60 L 954.96,324.54 L 955.40,327.45 L 955.40,330.36 L 954.96,333.27 L 953.21,335.21 L 950.59,335.21 L 948.84,333.27 L 948.40,330.36 L 948.40,327.45 L 948.84,324.54 Z M 963.59,322.60 L 966.21,322.60 L 967.96,324.54 L 968.40,327.45 L 968.40,330.36 L 967.96,333.27 L 966.21,335.21 L 963.59,335.21 L 961.84,333.27 L 961.40,330.36 L 961.40,327.45 L 961.84,324.54 Z M 976.59,322.60 L 979.21,322.60 L 980.96,324.54 L 981.40,327.45 L 981.40,330.36 L 980.96,333.27 L 979.21,335.21 L 976.59,335.21 L 974.84,333.27 L 974.40,330.36 L 974.40,327.45 L 974.84,324.54 Z M 987.84,331.33 L 993.52,331.33 L 993.52,329.88 L 992.65,328.42 L 991.60,327.94 L 989.85,327.94 L 988.54,328.71 L 987.84,330.36 L 987.84,332.79 L 988.54,334.53 L 989.85,335.21 L 991.60,335.21 L 993.52,334.24 M 1003.90,326.48 L 1003.90,334.24 M 1000.40,330.36 L 1007.40,330.36" fill="none" stroke="#3a0a60" stroke-width="1.00" stroke-linecap="square" stroke-linejoin="miter" shape-rendering="crispEdges"/>
<rect x="1381.5" y="54.00" width="17" height="28.00" fill="#ff0000"/>
<rect x="1381.5" y="81.70" width="17" height="28.00" fill="#ff6600"/>
<rect x="1381.5" y="109.40" width="17" height="28.00" fill="#ffff00"/>
<rect x="1381.5" y="137.10" width="17" height="28.00" fill="#aaff00"/>
<rect x="1381.5" y="164.80" width="17" height="28.00" fill="#00ff00"/>
<rect x="1381.5" y="192.50" width="17" height="28.00" fill="#66ff66"/>
<rect x="1381.5" y="220.20" width="17" height="28.00" fill="#80ffe0"/>
<rect x="1381.5" y="247.90" width="17" height="28.00" fill="#1ea0ff"/>
<rect x="1381.5" y="275.60" width="17" height="28.00" fill="#0000ff"/>
<rect x="1381.5" y="303.30" width="17" height="28.00" fill="#282878"/>
<rect x="1381.5" y="81.10" width="17" height="1.2" fill="#000"/>
<rect x="1381.5" y="108.80" width="17" height="1.2" fill="#000"/>
<rect x="1381.5" y="136.50" width="17" height="1.2" fill="#000"/>
<rect x="1381.5" y="164.20" width="17" height="1.2" fill="#000"/>
<rect x="1381.5" y="191.90" width="17" height="1.2" fill="#000"/>
<rect x="1381.5" y="219.60" width="17" height="1.2" fill="#000"/>
<rect x="1381.5" y="247.30" width="17" height="1.2" fill="#000"/>
<rect x="1381.5" y="275.00" width="17" height="1.2" fill="#000"/>
<rect x="1381.5" y="302.70" width="17" height="1.2" fill="#000"/>
<rect x="1381.5" y="54.2" width="17" height="277.00" fill="none" stroke="#000" stroke-width="1.4"/>
<path d="M 1435.65,58.21 L 1435.65,45.60 L 1430.40,54.33 L 1437.40,54.33 M 1446.55,57.63 L 1447.25,57.63 L 1447.25,58.21 L 1446.55,58.21 Z M 1461.65,58.21 L 1461.65,45.60 L 1456.40,54.33 L 1463.40,54.33 M 1469.66,48.02 L 1470.71,46.18 L 1472.03,45.60 L 1474.21,45.60 L 1475.79,46.38 L 1476.40,48.02 L 1476.40,49.97 L 1475.53,51.91 L 1469.40,58.21 L 1476.40,58.21 M 1484.59,45.60 L 1487.21,45.60 L 1488.96,47.54 L 1489.40,50.45 L 1489.40,53.36 L 1488.96,56.27 L 1487.21,58.21 L 1484.59,58.21 L 1482.84,56.27 L 1482.40,53.36 L 1482.40,50.45 L 1482.84,47.54 Z M 1495.84,54.33 L 1501.53,54.33 L 1501.53,52.88 L 1500.65,51.42 L 1499.60,50.94 L 1497.85,50.94 L 1496.54,51.71 L 1495.84,53.36 L 1495.84,55.79 L 1496.54,57.53 L 1497.85,58.21 L 1499.60,58.21 L 1501.53,57.24" fill="none" stroke="#3a0a60" stroke-width="1.00" stroke-linecap="square" stroke-linejoin="miter" shape-rendering="crispEdges"/>
<path d="M 1430.66,74.75 L 1432.15,73.30 L 1435.65,73.30 L 1437.14,74.75 L 1437.14,77.66 L 1435.65,79.31 L 1433.03,79.31 M 1435.65,79.31 L 1437.40,81.06 L 1437.40,83.97 L 1435.65,85.91 L 1432.15,85.91 L 1430.40,84.45 M 1446.55,85.33 L 1447.25,85.33 L 1447.25,85.91 L 1446.55,85.91 Z M 1458.15,73.30 L 1461.65,73.30 L 1462.96,74.75 L 1462.96,77.66 L 1461.65,79.31 L 1458.15,79.31 L 1456.84,77.66 L 1456.84,74.75 Z M 1458.15,79.31 L 1461.65,79.31 L 1463.40,81.06 L 1463.40,84.26 L 1461.65,85.91 L 1458.15,85.91 L 1456.40,84.26 L 1456.40,81.06 Z M 1471.59,73.30 L 1474.21,73.30 L 1475.96,75.24 L 1476.40,78.15 L 1476.40,81.06 L 1475.96,83.97 L 1474.21,85.91 L 1471.59,85.91 L 1469.84,83.97 L 1469.40,81.06 L 1469.40,78.15 L 1469.84,75.24 Z M 1488.96,73.30 L 1483.28,73.30 L 1482.84,78.63 L 1484.59,77.96 L 1487.21,77.96 L 1488.96,79.12 L 1489.40,81.55 L 1488.96,84.45 L 1487.21,85.91 L 1484.59,85.91 L 1482.40,84.45 M 1495.84,82.03 L 1501.53,82.03 L 1501.53,80.58 L 1500.65,79.12 L 1499.60,78.63 L 1497.85,78.63 L 1496.54,79.41 L 1495.84,81.06 L 1495.84,83.48 L 1496.54,85.23 L 1497.85,85.91 L 1499.60,85.91 L 1501.53,84.94" fill="none" stroke="#3a0a60" stroke-width="1.00" stroke-linecap="square" stroke-linejoin="miter" shape-rendering="crispEdges"/>
<path d="M 1430.66,102.45 L 1432.15,101.00 L 1435.65,101.00 L 1437.14,102.45 L 1437.14,105.36 L 1435.65,107.01 L 1433.03,107.01 M 1435.65,107.01 L 1437.40,108.76 L 1437.40,111.67 L 1435.65,113.61 L 1432.15,113.61 L 1430.40,112.16 M 1446.55,113.03 L 1447.25,113.03 L 1447.25,113.61 L 1446.55,113.61 Z M 1459.90,101.00 L 1459.90,113.61 M 1476.40,106.33 L 1475.53,107.79 L 1473.78,108.28 L 1472.03,108.28 L 1470.28,107.31 L 1469.40,105.85 L 1469.40,103.42 L 1470.71,101.48 L 1472.03,101.00 L 1474.21,101.00 L 1475.79,101.97 L 1476.40,103.91 L 1476.40,107.79 L 1475.96,110.70 L 1474.65,113.12 L 1473.34,113.61 L 1471.59,113.61 L 1469.84,112.64 M 1484.59,101.00 L 1487.21,101.00 L 1488.96,102.94 L 1489.40,105.85 L 1489.40,108.76 L 1488.96,111.67 L 1487.21,113.61 L 1484.59,113.61 L 1482.84,111.67 L 1482.40,108.76 L 1482.40,105.85 L 1482.84,102.94 Z M 1495.84,109.73 L 1501.53,109.73 L 1501.53,108.28 L 1500.65,106.82 L 1499.60,106.33 L 1497.85,106.33 L 1496.54,107.11 L 1495.84,108.76 L 1495.84,111.19 L 1496.54,112.93 L 1497.85,113.61 L 1499.60,113.61 L 1501.53,112.64" fill="none" stroke="#3a0a60" stroke-width="1.00" stroke-linecap="square" stroke-linejoin="miter" shape-rendering="crispEdges"/>
<path d="M 1430.66,131.12 L 1431.71,129.28 L 1433.03,128.70 L 1435.21,128.70 L 1436.79,129.48 L 1437.40,131.12 L 1437.40,133.06 L 1436.53,135.00 L 1430.40,141.31 L 1437.40,141.31 M 1446.55,140.73 L 1447.25,140.73 L 1447.25,141.31 L 1446.55,141.31 Z M 1462.96,128.70 L 1457.28,128.70 L 1456.84,134.03 L 1458.59,133.36 L 1461.21,133.36 L 1462.96,134.52 L 1463.40,136.94 L 1462.96,139.85 L 1461.21,141.31 L 1458.59,141.31 L 1456.40,139.85 M 1469.40,128.70 L 1476.40,128.70 L 1474.65,132.09 L 1473.34,135.97 L 1472.46,141.31 M 1488.96,128.70 L 1483.28,128.70 L 1482.84,134.03 L 1484.59,133.36 L 1487.21,133.36 L 1488.96,134.52 L 1489.40,136.94 L 1488.96,139.85 L 1487.21,141.31 L 1484.59,141.31 L 1482.40,139.85 M 1495.84,137.43 L 1501.53,137.43 L 1501.53,135.97 L 1500.65,134.52 L 1499.60,134.03 L 1497.85,134.03 L 1496.54,134.81 L 1495.84,136.46 L 1495.84,138.88 L 1496.54,140.63 L 1497.85,141.31 L 1499.60,141.31 L 1501.53,140.34" fill="none" stroke="#3a0a60" stroke-width="1.00" stroke-linecap="square" stroke-linejoin="miter" shape-rendering="crispEdges"/>
<path d="M 1433.90,156.40 L 1433.90,169.01 M 1446.55,168.43 L 1447.25,168.43 L 1447.25,169.01 L 1446.55,169.01 Z M 1463.40,161.74 L 1462.53,163.19 L 1460.78,163.68 L 1459.03,163.68 L 1457.28,162.71 L 1456.40,161.25 L 1456.40,158.83 L 1457.71,156.89 L 1459.03,156.40 L 1461.21,156.40 L 1462.79,157.37 L 1463.40,159.31 L 1463.40,163.19 L 1462.96,166.10 L 1461.65,168.53 L 1460.34,169.01 L 1458.59,169.01 L 1456.84,168.04 M 1475.53,157.37 L 1474.21,156.40 L 1472.03,156.40 L 1470.28,157.86 L 1469.40,161.25 L 1469.40,166.10 L 1470.28,168.04 L 1472.03,169.01 L 1474.21,169.01 L 1475.79,168.04 L 1476.40,166.10 L 1476.40,164.16 L 1475.53,162.71 L 1474.21,162.03 L 1472.03,162.03 L 1470.28,163.00 L 1469.40,164.65 M 1484.59,156.40 L 1487.21,156.40 L 1488.96,158.34 L 1489.40,161.25 L 1489.40,164.16 L 1488.96,167.07 L 1487.21,169.01 L 1484.59,169.01 L 1482.84,167.07 L 1482.40,164.16 L 1482.40,161.25 L 1482.84,158.34 Z M 1495.84,165.13 L 1501.53,165.13 L 1501.53,163.68 L 1500.65,162.22 L 1499.60,161.74 L 1497.85,161.74 L 1496.54,162.51 L 1495.84,164.16 L 1495.84,166.59 L 1496.54,168.33 L 1497.85,169.01 L 1499.60,169.01 L 1501.53,168.04" fill="none" stroke="#3a0a60" stroke-width="1.00" stroke-linecap="square" stroke-linejoin="miter" shape-rendering="crispEdges"/>
<path d="M 1433.90,184.10 L 1433.90,196.71 M 1446.55,196.13 L 1447.25,196.13 L 1447.25,196.71 L 1446.55,196.71 Z M 1456.66,185.56 L 1458.15,184.10 L 1461.65,184.10 L 1463.14,185.56 L 1463.14,188.47 L 1461.65,190.11 L 1459.03,190.11 M 1461.65,190.11 L 1463.40,191.86 L 1463.40,194.77 L 1461.65,196.71 L 1458.15,196.71 L 1456.40,195.25 M 1474.65,196.71 L 1474.65,184.10 L 1469.40,192.83 L 1476.40,192.83 M 1488.96,184.10 L 1483.28,184.10 L 1482.84,189.44 L 1484.59,188.76 L 1487.21,188.76 L 1488.96,189.92 L 1489.40,192.34 L 1488.96,195.25 L 1487.21,196.71 L 1484.59,196.71 L 1482.40,195.25 M 1495.84,192.83 L 1501.53,192.83 L 1501.53,191.38 L 1500.65,189.92 L 1499.60,189.44 L 1497.85,189.44 L 1496.54,190.21 L 1495.84,191.86 L 1495.84,194.28 L 1496.54,196.03 L 1497.85,196.71 L 1499.60,196.71 L 1501.53,195.74" fill="none" stroke="#3a0a60" stroke-width="1.00" stroke-linecap="square" stroke-linejoin="miter" shape-rendering="crispEdges"/>
<path d="M 1430.40,211.80 L 1437.40,211.80 L 1435.65,215.19 L 1434.34,219.07 L 1433.46,224.41 M 1446.55,223.83 L 1447.25,223.83 L 1447.25,224.41 L 1446.55,224.41 Z M 1456.66,214.22 L 1457.71,212.38 L 1459.03,211.80 L 1461.21,211.80 L 1462.79,212.58 L 1463.40,214.22 L 1463.40,216.16 L 1462.53,218.10 L 1456.40,224.41 L 1463.40,224.41 M 1476.40,217.13 L 1475.53,218.59 L 1473.78,219.07 L 1472.03,219.07 L 1470.28,218.10 L 1469.40,216.65 L 1469.40,214.22 L 1470.71,212.28 L 1472.03,211.80 L 1474.21,211.80 L 1475.79,212.77 L 1476.40,214.71 L 1476.40,218.59 L 1475.96,221.50 L 1474.65,223.92 L 1473.34,224.41 L 1471.59,224.41 L 1469.84,223.44 M 1488.53,212.77 L 1487.21,211.80 L 1485.03,211.80 L 1483.28,213.25 L 1482.40,216.65 L 1482.40,221.50 L 1483.28,223.44 L 1485.03,224.41 L 1487.21,224.41 L 1488.79,223.44 L 1489.40,221.50 L 1489.40,219.56 L 1488.53,218.10 L 1487.21,217.43 L 1485.03,217.43 L 1483.28,218.40 L 1482.40,220.04 M 1495.84,220.53 L 1501.53,220.53 L 1501.53,219.07 L 1500.65,217.62 L 1499.60,217.13 L 1497.85,217.13 L 1496.54,217.91 L 1495.84,219.56 L 1495.84,221.98 L 1496.54,223.73 L 1497.85,224.41 L 1499.60,224.41 L 1501.53,223.44" fill="none" stroke="#3a0a60" stroke-width="1.00" stroke-linecap="square" stroke-linejoin="miter" shape-rendering="crispEdges"/>
<path d="M 1433.90,239.50 L 1433.90,252.11 M 1446.55,251.53 L 1447.25,251.53 L 1447.25,252.11 L 1446.55,252.11 Z M 1459.90,239.50 L 1459.90,252.11 M 1474.65,252.11 L 1474.65,239.50 L 1469.40,248.23 L 1476.40,248.23 M 1487.65,252.11 L 1487.65,239.50 L 1482.40,248.23 L 1489.40,248.23 M 1495.84,248.23 L 1501.53,248.23 L 1501.53,246.78 L 1500.65,245.32 L 1499.60,244.84 L 1497.85,244.84 L 1496.54,245.61 L 1495.84,247.26 L 1495.84,249.69 L 1496.54,251.43 L 1497.85,252.11 L 1499.60,252.11 L 1501.53,251.14" fill="none" stroke="#3a0a60" stroke-width="1.00" stroke-linecap="square" stroke-linejoin="miter" shape-rendering="crispEdges"/>
<path d="M 1417.84,273.50 L 1422.65,273.50 M 1436.96,267.20 L 1431.28,267.20 L 1430.84,272.53 L 1432.59,271.86 L 1435.21,271.86 L 1436.96,273.02 L 1437.40,275.44 L 1436.96,278.35 L 1435.21,279.81 L 1432.59,279.81 L 1430.40,278.35 M 1446.55,279.23 L 1447.25,279.23 L 1447.25,279.81 L 1446.55,279.81 Z M 1458.59,267.20 L 1461.21,267.20 L 1462.96,269.14 L 1463.40,272.05 L 1463.40,274.96 L 1462.96,277.87 L 1461.21,279.81 L 1458.59,279.81 L 1456.84,277.87 L 1456.40,274.96 L 1456.40,272.05 L 1456.84,269.14 Z M 1471.59,267.20 L 1474.21,267.20 L 1475.96,269.14 L 1476.40,272.05 L 1476.40,274.96 L 1475.96,277.87 L 1474.21,279.81 L 1471.59,279.81 L 1469.84,277.87 L 1469.40,274.96 L 1469.40,272.05 L 1469.84,269.14 Z M 1482.40,267.20 L 1489.40,267.20 L 1487.65,270.59 L 1486.34,274.47 L 1485.46,279.81 M 1495.84,275.93 L 1501.53,275.93 L 1501.53,274.47 L 1500.65,273.02 L 1499.60,272.53 L 1497.85,272.53 L 1496.54,273.31 L 1495.84,274.96 L 1495.84,277.38 L 1496.54,279.13 L 1497.85,279.81 L 1499.60,279.81 L 1501.53,278.84" fill="none" stroke="#3a0a60" stroke-width="1.00" stroke-linecap="square" stroke-linejoin="miter" shape-rendering="crispEdges"/>
<path d="M 1417.84,301.20 L 1422.65,301.20 M 1433.90,294.90 L 1433.90,307.51 M 1446.55,306.93 L 1447.25,306.93 L 1447.25,307.51 L 1446.55,307.51 Z M 1459.90,294.90 L 1459.90,307.51 M 1472.90,294.90 L 1472.90,307.51 M 1488.53,295.87 L 1487.21,294.90 L 1485.03,294.90 L 1483.28,296.35 L 1482.40,299.75 L 1482.40,304.60 L 1483.28,306.54 L 1485.03,307.51 L 1487.21,307.51 L 1488.79,306.54 L 1489.40,304.60 L 1489.40,302.66 L 1488.53,301.20 L 1487.21,300.53 L 1485.03,300.53 L 1483.28,301.50 L 1482.40,303.14 M 1495.84,303.63 L 1501.53,303.63 L 1501.53,302.17 L 1500.65,300.72 L 1499.60,300.23 L 1497.85,300.23 L 1496.54,301.01 L 1495.84,302.66 L 1495.84,305.08 L 1496.54,306.83 L 1497.85,307.51 L 1499.60,307.51 L 1501.53,306.54" fill="none" stroke="#3a0a60" stroke-width="1.00" stroke-linecap="square" stroke-linejoin="miter" shape-rendering="crispEdges"/>
<path d="M 1417.84,328.91 L 1422.65,328.91 M 1433.90,322.60 L 1433.90,335.21 M 1446.55,334.63 L 1447.25,334.63 L 1447.25,335.21 L 1446.55,335.21 Z M 1456.40,322.60 L 1463.40,322.60 L 1461.65,326.00 L 1460.34,329.88 L 1459.46,335.21 M 1469.66,324.06 L 1471.15,322.60 L 1474.65,322.60 L 1476.14,324.06 L 1476.14,326.97 L 1474.65,328.61 L 1472.03,328.61 M 1474.65,328.61 L 1476.40,330.36 L 1476.40,333.27 L 1474.65,335.21 L 1471.15,335.21 L 1469.40,333.75 M 1485.90,322.60 L 1485.90,335.21 M 1495.84,331.33 L 1501.53,331.33 L 1501.53,329.88 L 1500.65,328.42 L 1499.60,327.94 L 1497.85,327.94 L 1496.54,328.71 L 1495.84,330.36 L 1495.84,332.79 L 1496.54,334.53 L 1497.85,335.21 L 1499.60,335.21 L 1501.53,334.24" fill="none" stroke="#3a0a60" stroke-width="1.00" stroke-linecap="square" stroke-linejoin="miter" shape-rendering="crispEdges"/>
<path d="M 10.00,66.00 L 9.00,68.40 M 10.00,67.20 L 13.00,67.20 M 11.00,67.20 L 12.00,69.60 M 15.00,66.00 L 14.00,68.40 M 15.00,67.20 L 19.00,67.20 M 16.00,67.20 L 17.00,69.60 M 10.00,70.80 L 18.00,70.80 L 18.00,73.20 L 10.00,73.20 L 10.00,75.60 L 18.00,75.60 L 17.50,78.00 L 16.00,78.00 M 14.00,69.60 L 14.00,78.00 M 13.00,75.60 L 10.00,78.00" fill="none" stroke="#3a0a60" stroke-width="1.00" stroke-linecap="butt" shape-rendering="crispEdges"/>
<path d="M 44.76,65.30 L 39.08,65.30 L 38.64,70.63 L 40.39,69.96 L 43.01,69.96 L 44.76,71.12 L 45.20,73.55 L 44.76,76.45 L 43.01,77.91 L 40.39,77.91 L 38.20,76.45" fill="none" stroke="#3a0a60" stroke-width="1.00" stroke-linecap="square" stroke-linejoin="miter" shape-rendering="crispEdges"/>
<path d="M 61.00,69.60 L 61.00,75.60 M 61.00,69.60 L 65.00,69.60 L 65.00,75.60 M 63.00,67.20 L 63.00,78.00 M 68.00,66.00 L 68.00,69.60 M 68.00,67.80 L 71.00,67.80 M 66.00,69.60 L 71.00,69.60 L 71.00,75.60 L 66.00,75.60 Z M 66.00,72.60 L 71.00,72.60 M 67.00,75.60 L 65.50,78.00 M 70.00,75.60 L 71.50,78.00" fill="none" stroke="#3a0a60" stroke-width="1.00" stroke-linecap="butt" shape-rendering="crispEdges"/>
<path d="M 91.75,65.30 L 90.00,68.21 L 90.00,75.00 L 91.75,77.91" fill="none" stroke="#3a0a60" stroke-width="1.00" stroke-linecap="square" stroke-linejoin="miter" shape-rendering="crispEdges"/>
<path d="M 102.45,66.00 L 102.45,73.20 M 107.95,66.00 L 107.95,73.20 M 99.70,69.00 L 110.70,69.00 M 99.70,73.20 L 110.70,73.20 M 103.00,75.00 L 100.80,78.00 M 107.40,75.00 L 109.60,78.00" fill="none" stroke="#3a0a60" stroke-width="1.00" stroke-linecap="butt" shape-rendering="crispEdges"/>
<path d="M 128.75,65.30 L 132.25,65.30 L 133.56,66.75 L 133.56,69.66 L 132.25,71.31 L 128.75,71.31 L 127.44,69.66 L 127.44,66.75 Z M 128.75,71.31 L 132.25,71.31 L 134.00,73.06 L 134.00,76.26 L 132.25,77.91 L 128.75,77.91 L 127.00,76.26 L 127.00,73.06 Z" fill="none" stroke="#3a0a60" stroke-width="1.00" stroke-linecap="square" stroke-linejoin="miter" shape-rendering="crispEdges"/>
<path d="M 150.70,69.60 L 150.70,75.60 M 150.70,69.60 L 154.70,69.60 L 154.70,75.60 M 152.70,67.20 L 152.70,78.00 M 157.70,66.00 L 157.70,69.60 M 157.70,67.80 L 160.70,67.80 M 155.70,69.60 L 160.70,69.60 L 160.70,75.60 L 155.70,75.60 Z M 155.70,72.60 L 160.70,72.60 M 156.70,75.60 L 155.20,78.00 M 159.70,75.60 L 161.20,78.00" fill="none" stroke="#3a0a60" stroke-width="1.00" stroke-linecap="butt" shape-rendering="crispEdges"/>
<path d="M 166.75,65.30 L 168.50,68.21 L 168.50,75.00 L 166.75,77.91" fill="none" stroke="#3a0a60" stroke-width="1.00" stroke-linecap="square" stroke-linejoin="miter" shape-rendering="crispEdges"/>
<path d="M 15.25,91.00 L 13.50,93.91 L 13.50,100.70 L 15.25,103.61 M 23.30,103.61 L 23.30,91.00 L 26.80,99.73 L 30.30,91.00 L 30.30,103.61 M 36.60,103.61 L 36.60,91.00 L 41.85,91.00 L 43.60,92.94 L 43.60,95.85 L 41.85,97.79 L 36.60,97.79 M 50.78,95.85 L 52.53,94.88 L 55.15,94.88 L 56.90,96.82 L 56.90,103.61 M 56.90,98.76 L 51.65,98.76 L 49.90,100.70 L 49.90,102.64 L 51.65,103.61 L 55.15,103.61 L 56.90,101.67 M 64.95,91.00 L 66.70,93.91 L 66.70,100.70 L 64.95,103.61" fill="none" stroke="#3a0a60" stroke-width="1.00" stroke-linecap="square" stroke-linejoin="miter" shape-rendering="crispEdges"/>
<path d="M 11.55,119.70 L 19.95,119.70 L 19.95,124.50 L 11.55,124.50 M 11.55,119.70 L 11.55,129.30 L 13.65,130.50 L 21.00,130.50 L 21.00,128.10 M 27.95,118.50 L 27.95,120.30 M 22.70,120.30 L 33.20,120.30 M 25.85,121.50 L 25.85,124.50 M 30.05,121.50 L 30.05,124.50 M 23.75,123.30 L 24.80,124.50 M 32.15,123.30 L 31.10,124.50 M 24.80,125.70 L 31.10,125.70 L 24.80,130.50 M 25.85,126.90 L 33.20,130.50 M 34.90,119.70 L 40.15,119.70 M 34.90,124.50 L 40.15,124.50 M 36.48,119.70 L 36.48,126.90 L 34.90,130.50 M 38.57,119.70 L 38.57,130.50 M 44.35,118.50 L 41.20,122.10 M 44.35,122.10 L 41.20,125.70 M 45.40,125.70 L 41.20,130.50" fill="none" stroke="#3a0a60" stroke-width="1.00" stroke-linecap="butt" shape-rendering="crispEdges"/>
<path d="M 10.10,143.50 L 10.10,156.50 L 13.40,155.20 M 10.10,148.70 L 13.40,148.70 M 15.60,143.50 L 15.60,155.20 L 16.70,156.50 L 20.00,156.50 L 20.00,153.90 M 15.60,150.00 L 18.90,147.40 M 24.20,143.50 L 22.00,148.70 M 23.65,147.40 L 23.65,156.50 M 25.30,144.80 L 29.70,144.80 M 27.50,144.80 L 26.40,150.00 L 29.70,150.00 L 28.60,155.20 L 25.30,156.50 M 30.80,146.10 L 30.80,153.90 M 33.00,143.50 L 33.00,156.50 L 31.90,156.50" fill="none" stroke="#3a0a60" stroke-width="1.00" stroke-linecap="butt" shape-rendering="crispEdges"/>
<path d="M 63.50,143.20 L 63.50,155.81 M 76.35,155.23 L 77.05,155.23 L 77.05,155.81 L 76.35,155.81 Z M 88.59,143.20 L 91.21,143.20 L 92.96,145.14 L 93.40,148.05 L 93.40,150.96 L 92.96,153.87 L 91.21,155.81 L 88.59,155.81 L 86.84,153.87 L 86.40,150.96 L 86.40,148.05 L 86.84,145.14 Z M 99.86,145.62 L 100.91,143.78 L 102.22,143.20 L 104.41,143.20 L 105.99,143.98 L 106.60,145.62 L 106.60,147.56 L 105.72,149.50 L 99.60,155.81 L 106.60,155.81 M 114.99,143.20 L 117.61,143.20 L 119.36,145.14 L 119.80,148.05 L 119.80,150.96 L 119.36,153.87 L 117.61,155.81 L 114.99,155.81 L 113.24,153.87 L 112.80,150.96 L 112.80,148.05 L 113.24,145.14 Z M 126.26,145.62 L 127.31,143.78 L 128.62,143.20 L 130.81,143.20 L 132.39,143.98 L 133.00,145.62 L 133.00,147.56 L 132.12,149.50 L 126.00,155.81 L 133.00,155.81 M 146.20,143.20 L 139.20,143.20 L 139.20,155.81 L 146.20,155.81 M 139.20,149.50 L 144.45,149.50 M 155.90,147.08 L 155.90,154.84 M 152.40,150.96 L 159.40,150.96 M 169.10,143.20 L 169.10,155.81 M 180.99,143.20 L 183.61,143.20 L 185.36,145.14 L 185.80,148.05 L 185.80,150.96 L 185.36,153.87 L 183.61,155.81 L 180.99,155.81 L 179.24,153.87 L 178.80,150.96 L 178.80,148.05 L 179.24,145.14 Z" fill="none" stroke="#3a0a60" stroke-width="1.00" stroke-linecap="square" stroke-linejoin="miter" shape-rendering="crispEdges"/>
<path d="M 9.00,172.30 L 15.30,172.30 M 12.15,169.80 L 12.15,172.30 M 9.00,174.80 L 16.35,174.80 M 11.10,176.05 L 10.05,178.55 L 14.25,178.55 M 12.15,177.30 L 12.15,182.30 M 9.00,181.05 L 15.30,181.05 M 16.35,169.80 L 17.40,182.30 L 19.50,179.80 M 17.93,171.05 L 18.98,172.30 M 19.50,174.80 L 15.30,182.30 M 21.50,171.68 L 32.00,171.68 M 24.65,169.80 L 24.65,173.55 M 28.85,169.80 L 28.85,173.55 M 23.60,174.80 L 21.50,178.55 M 22.55,177.30 L 22.55,182.30 M 24.65,175.43 L 32.00,175.43 M 30.95,175.43 L 30.95,182.30 L 29.90,182.30 M 25.70,177.30 L 28.85,177.30 L 28.85,179.80 L 25.70,179.80 Z M 37.15,169.80 L 35.05,173.55 M 36.10,172.30 L 36.10,177.30 M 36.10,171.05 L 43.45,171.05 M 36.10,172.93 L 42.40,172.93 M 36.10,174.80 L 42.40,174.80 M 36.10,176.68 L 43.45,176.68 M 39.25,169.80 L 39.25,176.68 M 34.00,179.18 L 44.50,179.18 M 39.25,177.30 L 39.25,182.30 M 38.20,179.80 L 34.00,182.30 M 40.30,179.80 L 44.50,182.30" fill="none" stroke="#3a0a60" stroke-width="1.00" stroke-linecap="butt" shape-rendering="crispEdges"/>
<path d="M 51.65,174.73 L 52.35,174.73 L 52.35,175.51 L 51.65,175.51 Z M 51.65,181.13 L 52.35,181.13 L 52.35,181.91 L 51.65,181.91 Z" fill="none" stroke="#3a0a60" stroke-width="1.00" stroke-linecap="square" stroke-linejoin="miter" shape-rendering="crispEdges"/>
<path d="M 61.80,181.91 L 61.80,169.30 L 65.30,178.03 L 68.80,169.30 L 68.80,181.91 M 74.80,173.18 L 78.30,181.91 M 81.80,173.18 L 77.42,185.79 M 87.80,169.30 L 87.80,181.91 L 94.80,181.91 M 102.55,173.18 L 106.05,173.18 L 107.80,175.12 L 107.80,179.97 L 106.05,181.91 L 102.55,181.91 L 100.80,179.97 L 100.80,175.12 Z M 114.67,174.15 L 116.42,173.18 L 119.05,173.18 L 120.80,175.12 L 120.80,181.91 M 120.80,177.06 L 115.55,177.06 L 113.80,179.00 L 113.80,180.94 L 115.55,181.91 L 119.05,181.91 L 120.80,179.97 M 133.80,169.30 L 133.80,181.91 M 133.80,175.12 L 132.05,173.18 L 128.55,173.18 L 126.80,175.12 L 126.80,179.97 L 128.55,181.91 L 132.05,181.91 L 133.80,179.97 M 146.80,171.24 L 145.05,169.30 L 141.55,169.30 L 139.80,171.24 L 139.80,173.18 L 141.55,175.12 L 145.05,176.09 L 146.80,178.03 L 146.80,179.97 L 145.05,181.91 L 141.55,181.91 L 139.80,179.97 M 153.24,178.03 L 158.93,178.03 L 158.93,176.58 L 158.05,175.12 L 157.00,174.64 L 155.25,174.64 L 153.94,175.41 L 153.24,177.06 L 153.24,179.49 L 153.94,181.23 L 155.25,181.91 L 157.00,181.91 L 158.93,180.94 M 168.43,169.30 L 168.43,180.94 L 169.30,181.91 L 171.05,181.91 M 165.80,173.18 L 171.93,173.18 M 194.95,174.73 L 195.65,174.73 L 195.65,175.51 L 194.95,175.51 Z M 194.95,181.13 L 195.65,181.13 L 195.65,181.91 L 194.95,181.91 Z M 230.80,181.91 L 230.80,169.30 L 236.05,169.30 L 237.80,171.24 L 237.80,174.15 L 236.05,176.09 L 230.80,176.09 M 243.80,181.91 L 243.80,169.30 L 249.05,169.30 L 250.80,171.24 L 250.80,174.15 L 249.05,176.09 L 243.80,176.09 M 247.30,176.09 L 250.80,181.91 M 256.80,169.30 L 263.80,169.30 M 260.30,169.30 L 260.30,181.91 M 271.99,169.30 L 274.61,169.30 L 276.36,171.24 L 276.80,174.15 L 276.80,177.06 L 276.36,179.97 L 274.61,181.91 L 271.99,181.91 L 270.24,179.97 L 269.80,177.06 L 269.80,174.15 L 270.24,171.24 Z M 284.99,169.30 L 287.61,169.30 L 289.36,171.24 L 289.80,174.15 L 289.80,177.06 L 289.36,179.97 L 287.61,181.91 L 284.99,181.91 L 283.24,179.97 L 282.80,177.06 L 282.80,174.15 L 283.24,171.24 Z M 297.99,169.30 L 300.61,169.30 L 302.36,171.24 L 302.80,174.15 L 302.80,177.06 L 302.36,179.97 L 300.61,181.91 L 297.99,181.91 L 296.24,179.97 L 295.80,177.06 L 295.80,174.15 L 296.24,171.24 Z M 312.30,169.30 L 312.30,181.91" fill="none" stroke="#3a0a60" stroke-width="1.00" stroke-linecap="square" stroke-linejoin="miter" shape-rendering="crispEdges"/>
<path d="M 516.00,120.30 L 522.30,120.30 M 519.15,117.80 L 519.15,120.30 M 516.00,122.80 L 523.35,122.80 M 518.10,124.05 L 517.05,126.55 L 521.25,126.55 M 519.15,125.30 L 519.15,130.30 M 516.00,129.05 L 522.30,129.05 M 523.35,117.80 L 524.40,130.30 L 526.50,127.80 M 524.92,119.05 L 525.98,120.30 M 526.50,122.80 L 522.30,130.30 M 528.50,119.67 L 539.00,119.67 M 531.65,117.80 L 531.65,121.55 M 535.85,117.80 L 535.85,121.55 M 530.60,122.80 L 528.50,126.55 M 529.55,125.30 L 529.55,130.30 M 531.65,123.42 L 539.00,123.42 M 537.95,123.42 L 537.95,130.30 L 536.90,130.30 M 532.70,125.30 L 535.85,125.30 L 535.85,127.80 L 532.70,127.80 Z M 544.15,117.80 L 542.05,121.55 M 543.10,120.30 L 543.10,125.30 M 543.10,119.05 L 550.45,119.05 M 543.10,120.92 L 549.40,120.92 M 543.10,122.80 L 549.40,122.80 M 543.10,124.67 L 550.45,124.67 M 546.25,117.80 L 546.25,124.67 M 541.00,127.17 L 551.50,127.17 M 546.25,125.30 L 546.25,130.30 M 545.20,127.80 L 541.00,130.30 M 547.30,127.80 L 551.50,130.30" fill="none" stroke="#3a0a60" stroke-width="1.00" stroke-linecap="butt" shape-rendering="crispEdges"/>
<path d="M 558.65,122.73 L 559.35,122.73 L 559.35,123.51 L 558.65,123.51 Z M 558.65,129.13 L 559.35,129.13 L 559.35,129.91 L 558.65,129.91 Z" fill="none" stroke="#3a0a60" stroke-width="1.00" stroke-linecap="square" stroke-linejoin="miter" shape-rendering="crispEdges"/>
<path d="M 568.80,129.91 L 568.80,117.30 L 572.30,126.03 L 575.80,117.30 L 575.80,129.91 M 581.80,121.18 L 585.30,129.91 M 588.80,121.18 L 584.42,133.79 M 594.80,117.30 L 594.80,129.91 L 601.80,129.91 M 609.55,121.18 L 613.05,121.18 L 614.80,123.12 L 614.80,127.97 L 613.05,129.91 L 609.55,129.91 L 607.80,127.97 L 607.80,123.12 Z M 621.67,122.15 L 623.42,121.18 L 626.05,121.18 L 627.80,123.12 L 627.80,129.91 M 627.80,125.06 L 622.55,125.06 L 620.80,127.00 L 620.80,128.94 L 622.55,129.91 L 626.05,129.91 L 627.80,127.97 M 640.80,117.30 L 640.80,129.91 M 640.80,123.12 L 639.05,121.18 L 635.55,121.18 L 633.80,123.12 L 633.80,127.97 L 635.55,129.91 L 639.05,129.91 L 640.80,127.97 M 653.80,119.24 L 652.05,117.30 L 648.55,117.30 L 646.80,119.24 L 646.80,121.18 L 648.55,123.12 L 652.05,124.09 L 653.80,126.03 L 653.80,127.97 L 652.05,129.91 L 648.55,129.91 L 646.80,127.97 M 660.24,126.03 L 665.92,126.03 L 665.92,124.58 L 665.05,123.12 L 664.00,122.63 L 662.25,122.63 L 660.94,123.41 L 660.24,125.06 L 660.24,127.48 L 660.94,129.23 L 662.25,129.91 L 664.00,129.91 L 665.92,128.94 M 675.42,117.30 L 675.42,128.94 L 676.30,129.91 L 678.05,129.91 M 672.80,121.18 L 678.92,121.18 M 701.95,122.73 L 702.65,122.73 L 702.65,123.51 L 701.95,123.51 Z M 701.95,129.13 L 702.65,129.13 L 702.65,129.91 L 701.95,129.91 Z M 737.80,129.91 L 737.80,117.30 L 743.05,117.30 L 744.80,119.24 L 744.80,122.15 L 743.05,124.09 L 737.80,124.09 M 750.80,129.91 L 750.80,117.30 L 756.05,117.30 L 757.80,119.24 L 757.80,122.15 L 756.05,124.09 L 750.80,124.09 M 754.30,124.09 L 757.80,129.91 M 763.80,117.30 L 770.80,117.30 M 767.30,117.30 L 767.30,129.91 M 778.99,117.30 L 781.61,117.30 L 783.36,119.24 L 783.80,122.15 L 783.80,125.06 L 783.36,127.97 L 781.61,129.91 L 778.99,129.91 L 777.24,127.97 L 776.80,125.06 L 776.80,122.15 L 777.24,119.24 Z M 791.99,117.30 L 794.61,117.30 L 796.36,119.24 L 796.80,122.15 L 796.80,125.06 L 796.36,127.97 L 794.61,129.91 L 791.99,129.91 L 790.24,127.97 L 789.80,125.06 L 789.80,122.15 L 790.24,119.24 Z M 804.99,117.30 L 807.61,117.30 L 809.36,119.24 L 809.80,122.15 L 809.80,125.06 L 809.36,127.97 L 807.61,129.91 L 804.99,129.91 L 803.24,127.97 L 802.80,125.06 L 802.80,122.15 L 803.24,119.24 Z M 819.30,117.30 L 819.30,129.91" fill="none" stroke="#3a0a60" stroke-width="1.00" stroke-linecap="square" stroke-linejoin="miter" shape-rendering="crispEdges"/>
<path d="M 1024.00,94.30 L 1030.30,94.30 M 1027.15,91.80 L 1027.15,94.30 M 1024.00,96.80 L 1031.35,96.80 M 1026.10,98.05 L 1025.05,100.55 L 1029.25,100.55 M 1027.15,99.30 L 1027.15,104.30 M 1024.00,103.05 L 1030.30,103.05 M 1031.35,91.80 L 1032.40,104.30 L 1034.50,101.80 M 1032.92,93.05 L 1033.97,94.30 M 1034.50,96.80 L 1030.30,104.30 M 1036.50,93.67 L 1047.00,93.67 M 1039.65,91.80 L 1039.65,95.55 M 1043.85,91.80 L 1043.85,95.55 M 1038.60,96.80 L 1036.50,100.55 M 1037.55,99.30 L 1037.55,104.30 M 1039.65,97.42 L 1047.00,97.42 M 1045.95,97.42 L 1045.95,104.30 L 1044.90,104.30 M 1040.70,99.30 L 1043.85,99.30 L 1043.85,101.80 L 1040.70,101.80 Z M 1052.15,91.80 L 1050.05,95.55 M 1051.10,94.30 L 1051.10,99.30 M 1051.10,93.05 L 1058.45,93.05 M 1051.10,94.92 L 1057.40,94.92 M 1051.10,96.80 L 1057.40,96.80 M 1051.10,98.67 L 1058.45,98.67 M 1054.25,91.80 L 1054.25,98.67 M 1049.00,101.17 L 1059.50,101.17 M 1054.25,99.30 L 1054.25,104.30 M 1053.20,101.80 L 1049.00,104.30 M 1055.30,101.80 L 1059.50,104.30" fill="none" stroke="#3a0a60" stroke-width="1.00" stroke-linecap="butt" shape-rendering="crispEdges"/>
<path d="M 1066.65,96.73 L 1067.35,96.73 L 1067.35,97.51 L 1066.65,97.51 Z M 1066.65,103.13 L 1067.35,103.13 L 1067.35,103.91 L 1066.65,103.91 Z" fill="none" stroke="#3a0a60" stroke-width="1.00" stroke-linecap="square" stroke-linejoin="miter" shape-rendering="crispEdges"/>
<path d="M 1076.80,103.91 L 1076.80,91.30 L 1080.30,100.03 L 1083.80,91.30 L 1083.80,103.91 M 1089.80,95.18 L 1093.30,103.91 M 1096.80,95.18 L 1092.42,107.79 M 1102.80,91.30 L 1102.80,103.91 L 1109.80,103.91 M 1117.55,95.18 L 1121.05,95.18 L 1122.80,97.12 L 1122.80,101.97 L 1121.05,103.91 L 1117.55,103.91 L 1115.80,101.97 L 1115.80,97.12 Z M 1129.67,96.15 L 1131.42,95.18 L 1134.05,95.18 L 1135.80,97.12 L 1135.80,103.91 M 1135.80,99.06 L 1130.55,99.06 L 1128.80,101.00 L 1128.80,102.94 L 1130.55,103.91 L 1134.05,103.91 L 1135.80,101.97 M 1148.80,91.30 L 1148.80,103.91 M 1148.80,97.12 L 1147.05,95.18 L 1143.55,95.18 L 1141.80,97.12 L 1141.80,101.97 L 1143.55,103.91 L 1147.05,103.91 L 1148.80,101.97 M 1161.80,93.24 L 1160.05,91.30 L 1156.55,91.30 L 1154.80,93.24 L 1154.80,95.18 L 1156.55,97.12 L 1160.05,98.09 L 1161.80,100.03 L 1161.80,101.97 L 1160.05,103.91 L 1156.55,103.91 L 1154.80,101.97 M 1168.24,100.03 L 1173.92,100.03 L 1173.92,98.58 L 1173.05,97.12 L 1172.00,96.63 L 1170.25,96.63 L 1168.94,97.41 L 1168.24,99.06 L 1168.24,101.48 L 1168.94,103.23 L 1170.25,103.91 L 1172.00,103.91 L 1173.92,102.94 M 1183.42,91.30 L 1183.42,102.94 L 1184.30,103.91 L 1186.05,103.91 M 1180.80,95.18 L 1186.92,95.18 M 1209.95,96.73 L 1210.65,96.73 L 1210.65,97.51 L 1209.95,97.51 Z M 1209.95,103.13 L 1210.65,103.13 L 1210.65,103.91 L 1209.95,103.91 Z M 1245.80,103.91 L 1245.80,91.30 L 1251.05,91.30 L 1252.80,93.24 L 1252.80,96.15 L 1251.05,98.09 L 1245.80,98.09 M 1258.80,103.91 L 1258.80,91.30 L 1264.05,91.30 L 1265.80,93.24 L 1265.80,96.15 L 1264.05,98.09 L 1258.80,98.09 M 1262.30,98.09 L 1265.80,103.91 M 1271.80,91.30 L 1278.80,91.30 M 1275.30,91.30 L 1275.30,103.91 M 1286.99,91.30 L 1289.61,91.30 L 1291.36,93.24 L 1291.80,96.15 L 1291.80,99.06 L 1291.36,101.97 L 1289.61,103.91 L 1286.99,103.91 L 1285.24,101.97 L 1284.80,99.06 L 1284.80,96.15 L 1285.24,93.24 Z M 1299.99,91.30 L 1302.61,91.30 L 1304.36,93.24 L 1304.80,96.15 L 1304.80,99.06 L 1304.36,101.97 L 1302.61,103.91 L 1299.99,103.91 L 1298.24,101.97 L 1297.80,99.06 L 1297.80,96.15 L 1298.24,93.24 Z M 1312.99,91.30 L 1315.61,91.30 L 1317.36,93.24 L 1317.80,96.15 L 1317.80,99.06 L 1317.36,101.97 L 1315.61,103.91 L 1312.99,103.91 L 1311.24,101.97 L 1310.80,99.06 L 1310.80,96.15 L 1311.24,93.24 Z M 1327.30,91.30 L 1327.30,103.91" fill="none" stroke="#3a0a60" stroke-width="1.00" stroke-linecap="square" stroke-linejoin="miter" shape-rendering="crispEdges"/>
<path d="M 519.85,65.30 L 518.10,68.21 L 518.10,75.00 L 519.85,77.91" fill="none" stroke="#3a0a60" stroke-width="1.00" stroke-linecap="square" stroke-linejoin="miter" shape-rendering="crispEdges"/>
<path d="M 529.30,69.18 L 529.30,77.91 M 529.30,71.12 L 530.70,69.18 L 533.50,69.18 L 534.90,71.12 L 534.90,77.91 M 534.90,71.12 L 536.30,69.18 L 539.10,69.18 L 540.50,71.12 L 540.50,77.91" fill="none" stroke="#3a0a60" stroke-width="1.00" stroke-linecap="square" stroke-linejoin="miter" shape-rendering="crispEdges"/>
<path d="M 543.50,69.18 L 543.50,77.91 M 543.50,71.12 L 544.90,69.18 L 547.70,69.18 L 549.10,71.12 L 549.10,77.91 M 549.10,71.12 L 550.50,69.18 L 553.30,69.18 L 554.70,71.12 L 554.70,77.91" fill="none" stroke="#3a0a60" stroke-width="1.00" stroke-linecap="square" stroke-linejoin="miter" shape-rendering="crispEdges"/>
<path d="M 559.75,65.30 L 561.50,68.21 L 561.50,75.00 L 559.75,77.91" fill="none" stroke="#3a0a60" stroke-width="1.00" stroke-linecap="square" stroke-linejoin="miter" shape-rendering="crispEdges"/>
<path d="M 518.10,91.50 L 524.40,91.50 L 524.40,95.25 L 518.10,95.25 Z M 518.10,93.38 L 524.40,93.38 M 516.00,96.50 L 526.50,96.50 M 517.05,96.50 L 517.05,104.00 M 520.20,96.50 L 520.20,104.00 M 517.05,99.00 L 520.20,99.00 M 517.05,101.50 L 520.20,101.50 M 516.00,104.00 L 521.25,102.75 M 521.25,97.75 L 525.45,97.75 L 522.30,104.00 M 522.30,99.00 L 526.50,104.00 M 528.70,95.88 L 539.20,95.88 M 533.95,91.50 L 533.95,96.50 L 529.75,104.00 M 533.95,96.50 L 539.20,104.00 M 543.50,91.50 L 541.40,96.50 M 542.98,95.25 L 542.98,104.00 M 547.70,91.50 L 548.23,93.38 M 545.07,94.00 L 551.90,94.00 M 546.12,96.50 L 547.17,101.50 M 550.85,96.50 L 549.80,101.50 M 545.07,103.38 L 551.90,103.38 M 557.25,91.50 L 554.10,92.75 M 554.10,95.25 L 558.30,95.25 M 556.20,92.75 L 556.20,104.00 M 556.20,96.50 L 554.10,100.25 M 556.20,96.50 L 558.30,99.00 M 561.45,91.50 L 559.35,94.00 M 560.40,92.75 L 563.55,92.75 L 559.35,96.50 M 561.45,94.62 L 562.50,95.88 M 562.50,96.50 L 559.35,100.25 M 561.45,97.75 L 564.60,97.75 L 559.35,104.00 M 561.98,100.25 L 563.02,101.50" fill="none" stroke="#3a0a60" stroke-width="1.00" stroke-linecap="butt" shape-rendering="crispEdges"/>
<path d="M 595.60,91.30 L 602.60,91.30 L 600.85,94.69 L 599.54,98.58 L 598.66,103.91 M 611.75,103.33 L 612.45,103.33 L 612.45,103.91 L 611.75,103.91 Z M 627.73,92.27 L 626.41,91.30 L 624.23,91.30 L 622.48,92.75 L 621.60,96.15 L 621.60,101.00 L 622.48,102.94 L 624.23,103.91 L 626.41,103.91 L 627.99,102.94 L 628.60,101.00 L 628.60,99.06 L 627.73,97.60 L 626.41,96.93 L 624.23,96.93 L 622.48,97.90 L 621.60,99.55 M 640.73,92.27 L 639.41,91.30 L 637.23,91.30 L 635.48,92.75 L 634.60,96.15 L 634.60,101.00 L 635.48,102.94 L 637.23,103.91 L 639.41,103.91 L 640.99,102.94 L 641.60,101.00 L 641.60,99.06 L 640.73,97.60 L 639.41,96.93 L 637.23,96.93 L 635.48,97.90 L 634.60,99.55 M 649.79,91.30 L 652.41,91.30 L 654.16,93.24 L 654.60,96.15 L 654.60,99.06 L 654.16,101.97 L 652.41,103.91 L 649.79,103.91 L 648.04,101.97 L 647.60,99.06 L 647.60,96.15 L 648.04,93.24 Z M 660.86,93.72 L 661.91,91.88 L 663.23,91.30 L 665.41,91.30 L 666.99,92.08 L 667.60,93.72 L 667.60,95.66 L 666.73,97.60 L 660.60,103.91 L 667.60,103.91 M 680.60,91.30 L 673.60,91.30 L 673.60,103.91 L 680.60,103.91 M 673.60,97.60 L 678.85,97.60 M 687.04,97.60 L 691.85,97.60 M 701.79,91.30 L 704.41,91.30 L 706.16,93.24 L 706.60,96.15 L 706.60,99.06 L 706.16,101.97 L 704.41,103.91 L 701.79,103.91 L 700.04,101.97 L 699.60,99.06 L 699.60,96.15 L 700.04,93.24 Z M 714.35,91.30 L 717.85,91.30 L 719.16,92.75 L 719.16,95.66 L 717.85,97.31 L 714.35,97.31 L 713.04,95.66 L 713.04,92.75 Z M 714.35,97.31 L 717.85,97.31 L 719.60,99.06 L 719.60,102.26 L 717.85,103.91 L 714.35,103.91 L 712.60,102.26 L 712.60,99.06 Z" fill="none" stroke="#3a0a60" stroke-width="1.00" stroke-linecap="square" stroke-linejoin="miter" shape-rendering="crispEdges"/>
<path d="M 1030.25,65.30 L 1028.50,68.21 L 1028.50,75.00 L 1030.25,77.91 M 1038.30,77.91 L 1038.30,65.30 L 1041.80,74.03 L 1045.30,65.30 L 1045.30,77.91 M 1051.60,77.91 L 1051.60,65.30 L 1056.85,65.30 L 1058.60,67.24 L 1058.60,70.15 L 1056.85,72.09 L 1051.60,72.09 M 1065.78,70.15 L 1067.53,69.18 L 1070.15,69.18 L 1071.90,71.12 L 1071.90,77.91 M 1071.90,73.06 L 1066.65,73.06 L 1064.90,75.00 L 1064.90,76.94 L 1066.65,77.91 L 1070.15,77.91 L 1071.90,75.97 M 1079.95,65.30 L 1081.70,68.21 L 1081.70,75.00 L 1079.95,77.91" fill="none" stroke="#3a0a60" stroke-width="1.00" stroke-linecap="square" stroke-linejoin="miter" shape-rendering="crispEdges"/>
<path d="M 16.25,33.50 L 16.77,34.65 M 12.05,35.23 L 21.50,35.23 M 12.05,35.23 L 12.05,41.55 L 11.00,45.00 M 15.20,38.10 L 16.25,41.55 M 17.82,37.52 L 18.35,41.55 M 20.45,37.52 L 19.40,42.70 M 13.10,43.85 L 21.50,43.85 M 22.20,36.95 L 31.65,36.95 L 31.65,43.85 L 29.55,45.00 M 27.45,33.50 L 27.45,39.25 L 23.25,45.00" fill="none" stroke="#3a3a3a" stroke-width="1.10" stroke-linecap="butt"/>
<path d="M 519.80,33.50 L 517.50,38.10 M 519.23,36.95 L 519.23,45.00 M 524.40,33.50 L 524.98,35.23 M 521.52,35.80 L 529.00,35.80 M 522.67,38.10 L 523.83,42.70 M 527.85,38.10 L 526.70,42.70 M 521.52,44.42 L 529.00,44.42 M 533.45,33.50 L 530.00,34.65 M 530.00,36.95 L 534.60,36.95 M 532.30,34.65 L 532.30,45.00 M 532.30,38.10 L 530.00,41.55 M 532.30,38.10 L 534.60,40.40 M 538.05,33.50 L 535.75,35.80 M 536.90,34.65 L 540.35,34.65 L 535.75,38.10 M 538.05,36.38 L 539.20,37.52 M 539.20,38.10 L 535.75,41.55 M 538.05,39.25 L 541.50,39.25 L 535.75,45.00 M 538.62,41.55 L 539.77,42.70" fill="none" stroke="#3a3a3a" stroke-width="1.10" stroke-linecap="butt"/>
<path d="M 656.00,36.95 L 660.80,36.95 M 658.40,33.50 L 658.40,45.00 M 658.40,38.10 L 656.00,41.55 M 658.40,38.10 L 660.80,40.40 M 661.40,34.65 L 668.00,34.65 M 663.20,33.50 L 663.20,35.80 M 666.20,33.50 L 666.20,35.80 M 662.00,36.95 L 666.80,36.95 L 666.80,40.40 L 662.00,40.40 Z M 662.00,38.67 L 666.80,38.67 M 661.40,41.55 L 668.00,41.55 M 664.40,40.40 L 664.40,42.12 L 662.00,45.00 M 665.00,42.70 L 668.00,45.00" fill="none" stroke="#3a3a3a" stroke-width="1.10" stroke-linecap="butt"/>
<path d="M 1031.25,33.50 L 1031.78,34.65 M 1027.05,35.23 L 1036.50,35.23 M 1027.05,35.23 L 1027.05,41.55 L 1026.00,45.00 M 1030.20,38.10 L 1031.25,41.55 M 1032.83,37.52 L 1033.35,41.55 M 1035.45,37.52 L 1034.40,42.70 M 1028.10,43.85 L 1036.50,43.85 M 1037.50,36.95 L 1046.95,36.95 L 1046.95,43.85 L 1044.85,45.00 M 1042.75,33.50 L 1042.75,39.25 L 1038.55,45.00" fill="none" stroke="#3a3a3a" stroke-width="1.10" stroke-linecap="butt"/>
<path d="M 1082.20,33.50 L 1088.80,33.50 L 1088.80,36.95 L 1082.20,36.95 Z M 1082.20,35.23 L 1088.80,35.23 M 1080.00,38.10 L 1091.00,38.10 M 1081.10,38.10 L 1081.10,45.00 M 1084.40,38.10 L 1084.40,45.00 M 1081.10,40.40 L 1084.40,40.40 M 1081.10,42.70 L 1084.40,42.70 M 1080.00,45.00 L 1085.50,43.85 M 1085.50,39.25 L 1089.90,39.25 L 1086.60,45.00 M 1086.60,40.40 L 1091.00,45.00 M 1092.20,37.52 L 1103.20,37.52 M 1097.70,33.50 L 1097.70,38.10 L 1093.30,45.00 M 1097.70,38.10 L 1103.20,45.00 M 1108.80,33.50 L 1111.00,34.65 M 1105.50,35.80 L 1114.30,35.80 M 1109.90,35.80 L 1109.90,44.42 M 1106.60,39.83 L 1113.20,39.83 M 1104.40,44.42 L 1115.40,44.42 M 1118.80,33.50 L 1116.60,38.10 M 1118.25,36.95 L 1118.25,45.00 M 1119.90,35.23 L 1127.60,35.23 M 1123.75,33.50 L 1123.75,36.95 M 1121.00,36.95 L 1126.50,36.95 L 1126.50,43.85 L 1121.00,43.85 Z M 1121.00,39.25 L 1126.50,39.25 M 1121.00,41.55 L 1126.50,41.55 M 1119.90,36.95 L 1119.90,45.00 L 1127.60,45.00" fill="none" stroke="#3a3a3a" stroke-width="1.10" stroke-linecap="butt"/>
<polyline points="338,292.5 458.2,536.5 450.7,561.5" fill="none" stroke="#5a3cd0" stroke-width="1"/>
<line x1="440.7" y1="536.5" x2="458.2" y2="536.5" stroke="#5a3cd0" stroke-width="1"/>
<clipPath id="p1t"><polygon points="83.5,292.5 338.0,292.5 311.4,381.0 56.5,381.0"/></clipPath>
<g clip-path="url(#p1t)">
<polygon points="83.5,292.5 338.0,292.5 311.4,381.0 56.5,381.0" fill="#d0601c"/>
<polygon points="40.0,297.5 109.7,296.0 160.0,293.5 200.0,292.0 360.0,292.0 360.0,700.0 40.0,700.0" fill="#d2d01e"/>
<polygon points="40.0,300.5 109.7,299.9 190.0,295.0 260.0,292.0 360.0,288.0 360.0,700.0 40.0,700.0" fill="#8ed21e"/>
<polygon points="40.0,304.5 109.7,303.9 190.0,298.3 290.0,293.0 360.0,290.0 360.0,700.0 40.0,700.0" fill="#16d016"/>
<polygon points="40.0,308.5 109.7,307.9 190.0,302.7 323.0,298.3 360.0,297.5 360.0,700.0 40.0,700.0" fill="#6cd278"/>
<polygon points="40.0,313.5 109.7,312.9 190.0,307.2 323.0,303.8 360.0,303.0 360.0,700.0 40.0,700.0" fill="#72d0be"/>
<polygon points="40.0,319.5 109.7,318.8 190.0,313.8 323.0,309.4 360.0,308.5 360.0,700.0 40.0,700.0" fill="#2a8ad0"/>
<polygon points="40.0,328.0 109.7,327.8 135.6,329.2 189.4,328.8 229.2,324.8 263.0,318.8 318.7,336.4 360.0,336.4 360.0,700.0 40.0,700.0" fill="#1616d0"/>
<polygon points="40.0,352.0 80.0,349.0 145.6,343.7 199.3,341.7 241.1,343.7 318.7,336.4 360.0,336.4 360.0,700.0 40.0,700.0" fill="#2a8ad0"/>
<polygon points="40.0,363.0 109.7,355.7 189.4,352.0 288.9,348.7 360.0,347.0 360.0,700.0 40.0,700.0" fill="#72d0be"/>
<polygon points="40.0,367.0 109.7,363.6 288.9,354.7 360.0,353.0 360.0,700.0 40.0,700.0" fill="#6cd278"/>
<polygon points="40.0,371.0 109.7,368.6 288.9,360.7 360.0,359.0 360.0,700.0 40.0,700.0" fill="#16d016"/>
<polygon points="40.0,375.0 109.7,372.6 288.9,366.6 360.0,365.0 360.0,700.0 40.0,700.0" fill="#8ed21e"/>
<polygon points="40.0,379.0 109.7,376.6 288.9,372.6 360.0,371.0 360.0,700.0 40.0,700.0" fill="#d2d01e"/>
<polygon points="40.0,383.0 150.0,380.0 212.0,377.0 278.7,372.0 360.0,367.0 360.0,700.0 40.0,700.0" fill="#d0601c"/>
<polygon points="40.0,384.0 230.0,382.0 270.0,377.0 300.0,373.0 360.0,371.0 360.0,700.0 40.0,700.0" fill="#d01818"/>
<polygon points="68.0,333.0 92.0,334.5 103.0,336.0 92.0,337.5 68.0,340.0" fill="#38347c"/>
</g>
<clipPath id="p1f"><polygon points="56.5,381.0 311.4,381.0 343.7,450.0 388.4,550.0 423.7,648.0 167.0,651.0"/></clipPath>
<g clip-path="url(#p1f)">
<polygon points="56.5,381.0 311.4,381.0 343.7,450.0 388.4,550.0 423.7,648.0 167.0,651.0" fill="#b4b01c"/>
<polygon points="81.2,381.0 112.3,395.0 153.9,401.2 195.4,407.4 237.0,397.0 257.8,399.0 286.9,424.0 330.5,426.1 360.0,427.0 360.0,370.0 81.0,370.0" fill="#b05418"/>
<polygon points="274.4,381.0 299.3,403.2 360.0,403.2 360.0,370.0 274.0,370.0" fill="#b01818"/>
<polygon points="40.0,414.0 72.9,416.7 112.3,430.3 174.7,436.5 237.0,442.7 299.3,444.8 360.0,448.0 360.0,700.0 40.0,700.0" fill="#80b418"/>
<polygon points="40.0,449.0 87.4,451.0 153.9,457.3 237.0,462.5 299.3,465.6 370.0,468.0 370.0,700.0 40.0,700.0" fill="#18b418"/>
<polygon points="40.0,468.0 96.7,469.7 174.7,473.9 257.8,480.1 380.0,488.0 380.0,700.0 40.0,700.0" fill="#5cb464"/>
<polygon points="40.0,487.0 104.0,488.4 174.7,491.5 257.8,496.7 390.0,504.0 390.0,700.0 40.0,700.0" fill="#6cbcaa"/>
<polygon points="40.0,506.0 110.8,507.2 171.7,509.6 231.4,522.7 315.0,528.7 353.2,535.8 374.7,532.3 400.0,530.0 400.0,700.0 40.0,700.0" fill="#2880c0"/>
<polygon points="40.0,554.0 129.9,554.5 183.6,553.8 214.7,558.5 255.3,555.4 338.9,559.2 386.7,553.8 430.0,552.0 430.0,700.0 40.0,700.0" fill="#1a14c0"/>
<polygon points="40.0,611.0 151.4,611.1 219.4,607.5 255.3,602.2 279.2,611.1 343.7,611.1 370.0,577.6 393.8,575.3 440.0,575.0 440.0,700.0 40.0,700.0" fill="#302c6c"/>
<polygon points="405.8,651.0 430.0,651.0 410.6,621.8" fill="#1a14c0"/>
</g>
<clipPath id="p1r"><polygon points="338.0,292.5 361.0,340.0 385.6,400.0 413.7,470.0 452.4,568.0 423.7,648.0 388.4,550.0 343.7,450.0 311.4,381.0"/></clipPath>
<g clip-path="url(#p1r)">
<polygon points="338.0,292.5 361.0,340.0 385.6,400.0 413.7,470.0 452.4,568.0 423.7,648.0 388.4,550.0 343.7,450.0 311.4,381.0" fill="#235e7a"/>
<polygon points="311.4,381.0 343.7,450.0 388.4,550.0 423.7,648.0 388.4,550.0 386.0,530.0 374.0,466.0 360.0,430.0 335.0,395.8 316.0,368.0" fill="#3a7a78"/>
<polygon points="311.4,381.0 343.7,450.0 388.4,550.0 423.7,648.0 388.4,550.0 384.0,530.0 366.0,466.0 355.0,430.0 331.6,395.8 314.0,374.0" fill="#3e8a50"/>
<polygon points="311.4,381.0 343.7,450.0 388.4,550.0 423.7,648.0 388.4,550.0 382.0,530.0 358.0,466.0 349.6,430.0 328.3,395.8 312.0,379.0" fill="#1e8a2a"/>
<polygon points="311.4,381.0 343.7,450.0 388.4,550.0 423.7,648.0 388.4,550.0 381.0,530.0 352.0,466.0 342.3,430.0 325.0,395.8 311.4,381.0" fill="#748a1e"/>
<polygon points="311.4,381.0 343.7,450.0 388.4,550.0 423.7,648.0 345.0,455.0 336.0,430.0 321.6,395.8 311.4,381.0" fill="#8a3018"/>
<polygon points="338.0,292.5 361.0,340.0 385.6,400.0 404.0,446.0 390.0,420.0 368.0,383.0 350.0,345.0 336.0,300.0" fill="#3a7a78"/>
<polygon points="338.0,292.5 361.0,340.0 385.6,400.0 404.0,446.0 382.0,400.0 358.0,342.0 336.0,296.0" fill="#1e8a2a"/>
<polygon points="336.0,299.0 356.5,342.0 380.0,400.0 402.0,446.0 388.0,418.0 366.0,380.0 348.0,345.0" fill="#3a7a78"/>
<polygon points="331.7,351.7 357.8,382.3 364.1,385.0 381.3,406.7 401.1,437.3 406.0,450.0 413.7,470.0 452.4,568.0 423.7,648.0 395.0,585.0 388.0,550.0 375.9,466.0 368.6,440.9 357.8,412.0 347.0,388.6" fill="#1a1a7e"/>
<polygon points="410.9,477.8 415.0,513.0 432.0,519.4 460.0,568.0 423.7,648.0 410.6,621.8 397.0,580.0 399.4,554.7 397.4,505.9" fill="#27254c"/>
</g>
<polygon points="83.5,292.5 338.0,292.5 361.0,340.0 385.6,400.0 413.7,470.0 452.4,568.0 423.7,648.0 167.0,651.0 56.5,381.0" fill="none" stroke="#000" stroke-width="1.1"/>
<polyline points="56.5,381.0 311.4,381.0 338.0,292.5" fill="none" stroke="#000" stroke-width="1"/>
<polyline points="311.4,381.0 343.7,450.0 388.4,550.0 423.7,648.0" fill="none" stroke="#000" stroke-width="1"/>
<line x1="251.6" y1="488.4" x2="265.1" y2="488.4" stroke="#e01818" stroke-width="1.3"/>
<circle cx="265.1" cy="488.4" r="1.5" fill="#e01818"/>
<line x1="251.6" y1="488.4" x2="246.8" y2="479.0" stroke="#50d818" stroke-width="1.3"/>
<circle cx="246.8" cy="479.0" r="1.5" fill="#50d818"/>
<line x1="251.6" y1="488.4" x2="247.9" y2="500.3" stroke="#18d8d8" stroke-width="1.3"/>
<circle cx="247.9" cy="500.3" r="1.5" fill="#18d8d8"/>
<polygon points="122.1,604.5 145.1,604.5 152.4,623.3 146.8,638.7 124.1,638.7 116.2,623.3" fill="none" stroke="#3a0a60" stroke-width="1.2"/>
<polyline points="122.1,604.5 130.0,620.0 124.1,638.7" fill="none" stroke="#3a0a60" stroke-width="1.2"/>
<polyline points="145.1,604.5 139.9,620.0 146.8,638.7" fill="none" stroke="#3a0a60" stroke-width="1.2"/>
<polyline points="130.0,620.0 139.9,620.0" fill="none" stroke="#3a0a60" stroke-width="1.2"/>
<polyline points="116.2,623.3 152.4,623.3" fill="none" stroke="#3a0a60" stroke-width="1.2"/>
<polyline points="122.1,604.5 114.9,589.1" fill="none" stroke="#3a0a60" stroke-width="1.2"/>
<polyline points="152.4,620.0 174.7,620.0" fill="none" stroke="#3a0a60" stroke-width="1.2"/>
<polyline points="124.1,638.7 120.1,654.2" fill="none" stroke="#3a0a60" stroke-width="1.2"/>
<polyline points="113.5,580.6 117.5,583.8 120.1,580.6" fill="none" stroke="#3a0a60" stroke-width="1.2"/>
<polyline points="117.5,583.8 118.2,587.1" fill="none" stroke="#3a0a60" stroke-width="1.2"/>
<polyline points="176.7,612.8 185.3,619.4" fill="none" stroke="#3a0a60" stroke-width="1.2"/>
<polyline points="183.9,612.1 178.7,619.4" fill="none" stroke="#3a0a60" stroke-width="1.2"/>
<polyline points="116.2,652.7 122.1,652.7" fill="none" stroke="#3a0a60" stroke-width="1.2"/>
<polyline points="119.5,652.7 120.5,660.2 126.0,660.2" fill="none" stroke="#3a0a60" stroke-width="1.2"/>
<clipPath id="p2t"><polygon points="590.5,292.3 849.0,292.3 821.5,382.0 564.0,382.0"/></clipPath>
<g clip-path="url(#p2t)">
<polygon points="590.5,292.3 849.0,292.3 821.5,382.0 564.0,382.0" fill="#33307a"/>
</g>
<clipPath id="p2f"><polygon points="564.0,382.0 821.5,382.0 943.0,629.0 684.0,629.0"/></clipPath>
<g clip-path="url(#p2f)">
<polygon points="564.0,382.0 821.5,382.0 943.0,629.0 684.0,629.0" fill="#2d2a62"/>
<polygon points="550.0,424.5 705.0,421.0 830.0,423.0 960.0,424.0 960.0,700.0 550.0,700.0" fill="#1a18aa"/>
<polygon points="550.0,456.5 720.0,454.8 860.0,457.3 960.0,458.0 960.0,700.0 550.0,700.0" fill="#2474ac"/>
<polygon points="550.0,483.5 700.0,481.2 860.0,485.3 960.0,486.0 960.0,700.0 550.0,700.0" fill="#62a89a"/>
<polygon points="550.0,507.5 625.0,507.3 720.0,507.5 884.0,513.0 960.0,514.0 960.0,700.0 550.0,700.0" fill="#5aaa62"/>
<polygon points="550.0,529.0 636.6,529.1 896.3,536.4 960.0,537.0 960.0,700.0 550.0,700.0" fill="#18a81c"/>
<polygon points="550.0,549.5 647.0,549.9 906.7,558.2 960.0,559.0 960.0,700.0 550.0,700.0" fill="#78aa1a"/>
<polygon points="550.0,570.0 657.4,570.6 919.2,580.0 960.0,581.0 960.0,700.0 550.0,700.0" fill="#aaa81c"/>
<polygon points="550.0,590.0 666.7,590.4 919.2,600.8 960.0,601.5 960.0,700.0 550.0,700.0" fill="#aa5018"/>
<polygon points="550.0,610.0 677.1,610.1 919.2,621.5 960.0,622.0 960.0,700.0 550.0,700.0" fill="#aa1818"/>
</g>
<clipPath id="p2r"><polygon points="849.0,292.3 970.3,539.2 942.6,629.0 821.5,382.0"/></clipPath>
<g clip-path="url(#p2r)">
<polygon points="849.0,292.3 970.3,539.2 942.6,629.0 821.5,382.0" fill="#27244a"/>
<path d="M841.2,422.0 C868.8,394.4 878.2,373.0 875.7,346.6 L1100,346.6 L1100,800 L641.2,800 L641.2,422.0 Z" fill="#1a1878"/>
<path d="M858.6,457.3 C884.4,431.5 893.4,405.5 890.9,377.6 L1100,377.6 L1100,800 L658.6,800 L658.6,457.3 Z" fill="#225a80"/>
<path d="M872.7,486.0 C898.6,460.1 907.6,434.3 905.1,406.4 L1100,406.4 L1100,800 L672.7,800 L672.7,486.0 Z" fill="#4a7a72"/>
<path d="M885.6,512.0 C910.7,486.8 919.5,459.2 917.0,430.7 L1100,430.7 L1100,800 L685.6,800 L685.6,512.0 Z" fill="#427c4a"/>
<path d="M896.4,534.0 C922.0,508.4 930.9,482.0 928.4,454.0 L1100,454.0 L1100,800 L696.4,800 L696.4,534.0 Z" fill="#1a7c1e"/>
<path d="M907.4,556.4 C932.3,531.5 941.1,503.2 938.6,474.6 L1100,474.6 L1100,800 L707.4,800 L707.4,556.4 Z" fill="#587c1a"/>
<path d="M918.4,578.6 C943.2,553.7 952.0,525.4 949.5,496.8 L1100,496.8 L1100,800 L718.4,800 L718.4,578.6 Z" fill="#7a7a1a"/>
<path d="M929.3,600.8 C953.6,576.5 962.2,546.7 959.7,517.6 L1100,517.6 L1100,800 L729.3,800 L729.3,600.8 Z" fill="#7a4219"/>
<path d="M939.7,622.0 C962.9,598.8 971.2,566.1 968.7,536.0 L1100,536.0 L1100,800 L739.7,800 L739.7,622.0 Z" fill="#7a1a1a"/>
</g>
<polygon points="590.5,292.3 849.0,292.3 970.3,539.2 942.6,629.0 684.0,629.0 564.0,382.0" fill="none" stroke="#000" stroke-width="1.1"/>
<polyline points="564.0,382.0 821.5,382.0 849.0,292.3" fill="none" stroke="#000" stroke-width="1"/>
<line x1="821.5" y1="382" x2="942.6" y2="629" stroke="#000" stroke-width="1"/>
<line x1="758.6" y1="488.4" x2="772.1" y2="488.4" stroke="#e01818" stroke-width="1.3"/>
<circle cx="772.1" cy="488.4" r="1.5" fill="#e01818"/>
<line x1="758.6" y1="488.4" x2="753.8" y2="479.0" stroke="#50d818" stroke-width="1.3"/>
<circle cx="753.8" cy="479.0" r="1.5" fill="#50d818"/>
<line x1="758.6" y1="488.4" x2="754.9" y2="500.3" stroke="#18d8d8" stroke-width="1.3"/>
<circle cx="754.9" cy="500.3" r="1.5" fill="#18d8d8"/>
<polygon points="630.4,608.6 653.4,608.6 660.7,627.4 655.1,642.8 632.4,642.8 624.5,627.4" fill="none" stroke="#3a0a60" stroke-width="1.2"/>
<polyline points="630.4,608.6 638.3,624.1 632.4,642.8" fill="none" stroke="#3a0a60" stroke-width="1.2"/>
<polyline points="653.4,608.6 648.2,624.1 655.1,642.8" fill="none" stroke="#3a0a60" stroke-width="1.2"/>
<polyline points="638.3,624.1 648.2,624.1" fill="none" stroke="#3a0a60" stroke-width="1.2"/>
<polyline points="624.5,627.4 660.7,627.4" fill="none" stroke="#3a0a60" stroke-width="1.2"/>
<polyline points="630.4,608.6 623.2,593.2" fill="none" stroke="#3a0a60" stroke-width="1.2"/>
<polyline points="660.7,624.1 683.0,624.1" fill="none" stroke="#3a0a60" stroke-width="1.2"/>
<polyline points="632.4,642.8 628.4,658.3" fill="none" stroke="#3a0a60" stroke-width="1.2"/>
<polyline points="621.8,584.7 625.8,587.9 628.4,584.7" fill="none" stroke="#3a0a60" stroke-width="1.2"/>
<polyline points="625.8,587.9 626.5,591.2" fill="none" stroke="#3a0a60" stroke-width="1.2"/>
<polyline points="685.0,616.9 693.6,623.5" fill="none" stroke="#3a0a60" stroke-width="1.2"/>
<polyline points="692.2,616.2 687.0,623.5" fill="none" stroke="#3a0a60" stroke-width="1.2"/>
<polyline points="624.5,656.8 630.4,656.8" fill="none" stroke="#3a0a60" stroke-width="1.2"/>
<polyline points="627.8,656.8 628.8,664.3 634.3,664.3" fill="none" stroke="#3a0a60" stroke-width="1.2"/>
<line x1="1108.8" y1="307.7" x2="1355.3" y2="307.7" stroke="#c6c6c8" stroke-width="1"/>
<line x1="1082.2" y1="394.7" x2="1329.3" y2="394.7" stroke="#c6c6c8" stroke-width="1"/>
<line x1="1108.8" y1="307.7" x2="1082.2" y2="394.7" stroke="#c6c6c8" stroke-width="1"/>
<line x1="1355.3" y1="307.7" x2="1329.3" y2="394.7" stroke="#c6c6c8" stroke-width="1"/>
<line x1="1108.8" y1="307.7" x2="1225.1" y2="544.8" stroke="#c6c6c8" stroke-width="1"/>
<line x1="1355.3" y1="307.7" x2="1471.7" y2="544.8" stroke="#c6c6c8" stroke-width="1"/>
<line x1="1082.2" y1="394.7" x2="1198.5" y2="630.1" stroke="#c6c6c8" stroke-width="1"/>
<line x1="1329.3" y1="394.7" x2="1446.7" y2="630.1" stroke="#c6c6c8" stroke-width="1"/>
<line x1="1225.1" y1="544.8" x2="1471.7" y2="544.8" stroke="#c6c6c8" stroke-width="1"/>
<line x1="1198.5" y1="630.1" x2="1446.7" y2="630.1" stroke="#c6c6c8" stroke-width="1"/>
<line x1="1225.1" y1="544.8" x2="1198.5" y2="630.1" stroke="#c6c6c8" stroke-width="1"/>
<line x1="1471.7" y1="544.8" x2="1446.7" y2="630.1" stroke="#c6c6c8" stroke-width="1"/>
<line x1="1104.3" y1="298.3" x2="1114.3" y2="318.8" stroke="#f06a10" stroke-width="1.8"/>
<polygon points="1114.3,318.8 1111.0,316.5 1114.6,314.8" fill="#f06a10"/>
<polygon points="1104.3,298.3 1104.0,302.3 1107.6,300.6" fill="#f06a10"/>
<line x1="1167.0" y1="292.2" x2="1175.3" y2="321.6" stroke="#f01010" stroke-width="1.8"/>
<polygon points="1175.3,321.6 1172.4,318.8 1176.3,317.7" fill="#f01010"/>
<polygon points="1167.0,292.2 1166.0,296.1 1169.9,295.0" fill="#f01010"/>
<line x1="1229.6" y1="295.0" x2="1236.2" y2="321.6" stroke="#f01010" stroke-width="1.8"/>
<polygon points="1236.2,321.6 1233.4,318.7 1237.3,317.7" fill="#f01010"/>
<polygon points="1229.6,295.0 1228.5,298.9 1232.4,297.9" fill="#f01010"/>
<line x1="1292.7" y1="296.6" x2="1296.0" y2="318.8" stroke="#f06a10" stroke-width="1.5"/>
<polygon points="1296.0,318.8 1293.5,315.6 1297.5,315.0" fill="#f06a10"/>
<polygon points="1292.7,296.6 1291.2,300.4 1295.2,299.8" fill="#f06a10"/>
<line x1="1355.9" y1="302.2" x2="1355.3" y2="316.0" stroke="#f0f010" stroke-width="1.8"/>
<polygon points="1355.3,316.0 1353.5,312.4 1357.5,312.6" fill="#f0f010"/>
<polygon points="1355.9,302.2 1353.7,305.6 1357.7,305.8" fill="#f0f010"/>
<line x1="1098.8" y1="324.3" x2="1107.7" y2="335.4" stroke="#a0f010" stroke-width="1.5"/>
<line x1="1163.0" y1="324.3" x2="1167.0" y2="335.4" stroke="#10e010" stroke-width="1.5"/>
<line x1="1225.1" y1="324.3" x2="1227.9" y2="335.4" stroke="#10e010" stroke-width="1.5"/>
<line x1="1287.7" y1="324.3" x2="1288.8" y2="333.7" stroke="#40e040" stroke-width="1.2"/>
<line x1="1135.4" y1="363.1" x2="1142.0" y2="373.1" stroke="#a0f010" stroke-width="1.5"/>
<line x1="1197.4" y1="363.1" x2="1203.0" y2="373.1" stroke="#a0f010" stroke-width="1.5"/>
<line x1="1260.0" y1="363.1" x2="1265.0" y2="371.4" stroke="#10e010" stroke-width="1.5"/>
<line x1="1322.0" y1="363.1" x2="1326.5" y2="371.4" stroke="#10e010" stroke-width="1.5"/>
<line x1="1150.3" y1="370.1" x2="1151.3" y2="373.1" stroke="#1010f0" stroke-width="1.5"/>
<line x1="1213.0" y1="370.1" x2="1214.0" y2="373.1" stroke="#1010f0" stroke-width="1.5"/>
<line x1="1273.9" y1="368.4" x2="1273.9" y2="372.4" stroke="#1010f0" stroke-width="1.5"/>
<line x1="1331.5" y1="373.1" x2="1340.3" y2="373.1" stroke="#1010f0" stroke-width="1.5"/>
<line x1="1078.3" y1="394.7" x2="1086.6" y2="392.5" stroke="#202070" stroke-width="1.6"/>
<line x1="1143.7" y1="399.1" x2="1147.0" y2="388.7" stroke="#202070" stroke-width="1.6"/>
<line x1="1205.7" y1="388.0" x2="1205.7" y2="399.1" stroke="#202070" stroke-width="1.6"/>
<line x1="1263.9" y1="389.1" x2="1272.2" y2="398.0" stroke="#202070" stroke-width="1.6"/>
<line x1="1329.3" y1="396.3" x2="1332.5" y2="392.8" stroke="#1010f0" stroke-width="1.4"/>
<line x1="1131.0" y1="385.3" x2="1133.7" y2="391.9" stroke="#40e040" stroke-width="1.2"/>
<line x1="1089.0" y1="372.6" x2="1091.0" y2="371.6" stroke="#30a0f0" stroke-width="1.2"/>
<rect x="1155.9" y="350.9" width="1.5" height="2.5" fill="#80f0e0"/>
<rect x="1219.6" y="350.9" width="1.5" height="2.5" fill="#80f0e0"/>
<rect x="1281.6" y="350.9" width="1.5" height="2.5" fill="#30a0f0"/>
<rect x="1086.0" y="360.0" width="1.5" height="2.5" fill="#80f0e0"/>
<rect x="1167.0" y="426.8" width="1.5" height="2.5" fill="#40e040"/>
<rect x="1230.7" y="426.8" width="1.5" height="2.5" fill="#40e040"/>
<rect x="1291.6" y="426.8" width="1.5" height="2.5" fill="#40e040"/>
<rect x="1352.5" y="426.8" width="1.5" height="2.5" fill="#40e040"/>
<rect x="1380.0" y="365.0" width="1.5" height="2.5" fill="#40e040"/>
<rect x="1372.0" y="390.0" width="1.5" height="2.5" fill="#80f0e0"/>
<rect x="1394.0" y="426.0" width="1.5" height="2.5" fill="#40e040"/>
<rect x="1125.0" y="410.0" width="1.5" height="2.5" fill="#80f0e0"/>
<rect x="1160.0" y="445.0" width="1.5" height="2.5" fill="#80f0e0"/>
<rect x="1207.0" y="452.0" width="1.5" height="2.5" fill="#80f0e0"/>
<rect x="1296.0" y="453.0" width="1.5" height="2.5" fill="#80f0e0"/>
<rect x="1359.0" y="447.0" width="1.5" height="2.5" fill="#80f0e0"/>
<rect x="1108.0" y="418.0" width="1.5" height="2.5" fill="#80f0e0"/>
<rect x="1143.0" y="465.0" width="1.5" height="2.5" fill="#80f0e0"/>
<rect x="1190.0" y="508.0" width="1.5" height="2.5" fill="#80f0e0"/>
<rect x="1226.0" y="512.0" width="1.5" height="2.5" fill="#30a0f0"/>
<rect x="1402.0" y="446.0" width="1.5" height="2.5" fill="#80f0e0"/>
<rect x="1383.0" y="468.0" width="1.5" height="2.5" fill="#80f0e0"/>
<rect x="1394.0" y="490.0" width="1.5" height="2.5" fill="#30a0f0"/>
<rect x="1436.0" y="506.0" width="1.5" height="2.5" fill="#80f0e0"/>
<rect x="1140.0" y="530.0" width="1.5" height="2.5" fill="#80f0e0"/>
<rect x="1176.0" y="548.0" width="1.5" height="2.5" fill="#30a0f0"/>
<rect x="1219.0" y="566.0" width="1.5" height="2.5" fill="#80f0e0"/>
<rect x="1293.0" y="570.0" width="1.5" height="2.5" fill="#80f0e0"/>
<rect x="1353.0" y="570.0" width="1.5" height="2.5" fill="#80f0e0"/>
<rect x="1435.0" y="528.0" width="1.5" height="2.5" fill="#30a0f0"/>
<rect x="1404.0" y="567.0" width="1.5" height="2.5" fill="#30a0f0"/>
<rect x="1335.0" y="588.0" width="1.5" height="2.5" fill="#30a0f0"/>
<rect x="1268.0" y="610.0" width="1.5" height="2.5" fill="#30a0f0"/>
<rect x="1330.0" y="612.0" width="1.5" height="2.5" fill="#30a0f0"/>
<rect x="1415.0" y="615.0" width="1.5" height="2.5" fill="#80f0e0"/>
<line x1="1265.0" y1="487.8" x2="1278.5" y2="487.8" stroke="#e01818" stroke-width="1.3"/>
<circle cx="1278.5" cy="487.8" r="1.5" fill="#e01818"/>
<line x1="1265.0" y1="487.8" x2="1260.2" y2="478.4" stroke="#50d818" stroke-width="1.3"/>
<circle cx="1260.2" cy="478.4" r="1.5" fill="#50d818"/>
<line x1="1265.0" y1="487.8" x2="1261.3" y2="499.7" stroke="#18d8d8" stroke-width="1.3"/>
<circle cx="1261.3" cy="499.7" r="1.5" fill="#18d8d8"/>
<polygon points="1147.0,610.5 1170.0,610.5 1177.3,629.3 1171.7,644.7 1149.0,644.7 1141.1,629.3" fill="none" stroke="#3a0a60" stroke-width="1.2"/>
<polyline points="1147.0,610.5 1154.9,626.0 1149.0,644.7" fill="none" stroke="#3a0a60" stroke-width="1.2"/>
<polyline points="1170.0,610.5 1164.8,626.0 1171.7,644.7" fill="none" stroke="#3a0a60" stroke-width="1.2"/>
<polyline points="1154.9,626.0 1164.8,626.0" fill="none" stroke="#3a0a60" stroke-width="1.2"/>
<polyline points="1141.1,629.3 1177.3,629.3" fill="none" stroke="#3a0a60" stroke-width="1.2"/>
<polyline points="1147.0,610.5 1139.8,595.1" fill="none" stroke="#3a0a60" stroke-width="1.2"/>
<polyline points="1177.3,626.0 1199.6,626.0" fill="none" stroke="#3a0a60" stroke-width="1.2"/>
<polyline points="1149.0,644.7 1145.0,660.2" fill="none" stroke="#3a0a60" stroke-width="1.2"/>
<polyline points="1138.4,586.6 1142.4,589.8 1145.0,586.6" fill="none" stroke="#3a0a60" stroke-width="1.2"/>
<polyline points="1142.4,589.8 1143.1,593.1" fill="none" stroke="#3a0a60" stroke-width="1.2"/>
<polyline points="1201.6,618.8 1210.2,625.4" fill="none" stroke="#3a0a60" stroke-width="1.2"/>
<polyline points="1208.8,618.1 1203.6,625.4" fill="none" stroke="#3a0a60" stroke-width="1.2"/>
<polyline points="1141.1,658.7 1147.0,658.7" fill="none" stroke="#3a0a60" stroke-width="1.2"/>
<polyline points="1144.4,658.7 1145.4,666.2 1150.9,666.2" fill="none" stroke="#3a0a60" stroke-width="1.2"/>
</svg>
</body></html>
